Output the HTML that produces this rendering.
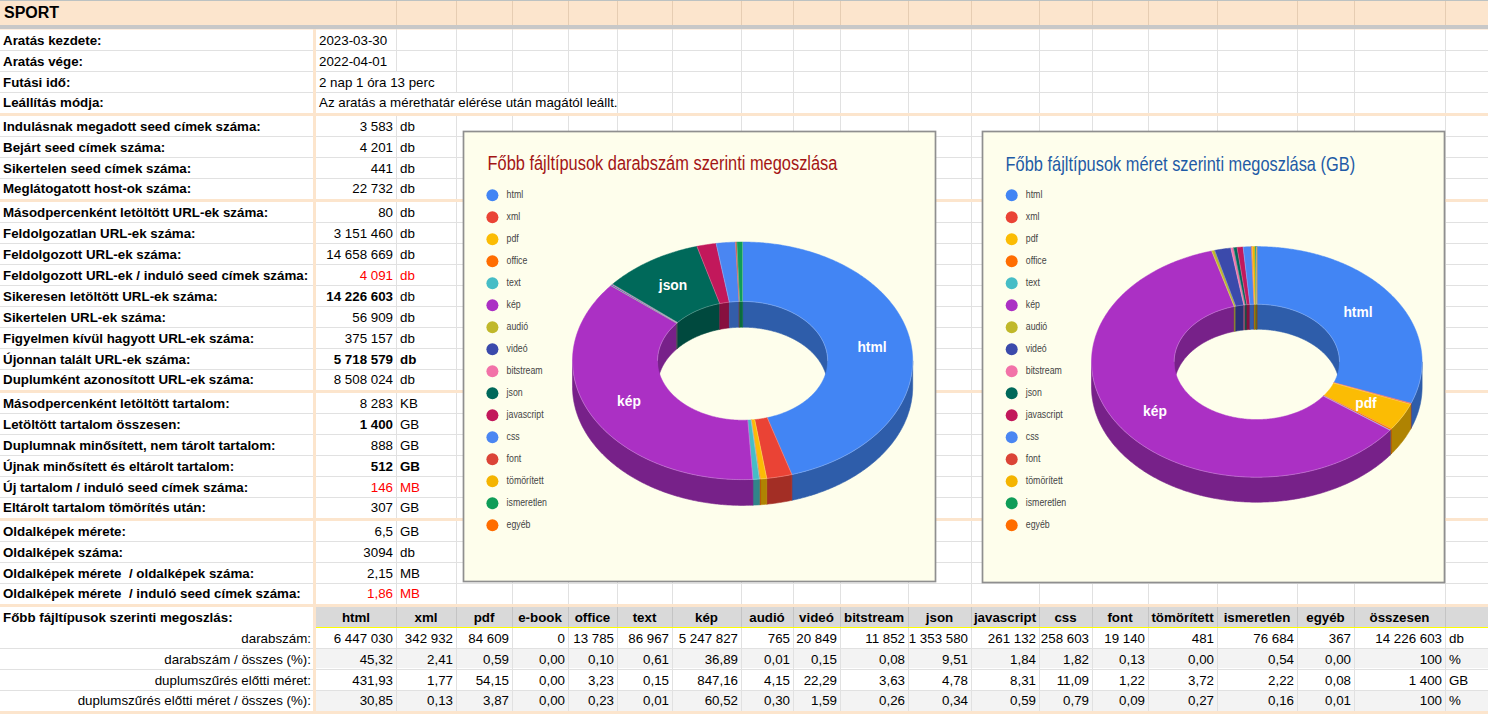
<!DOCTYPE html><html><head><meta charset="utf-8"><style>html,body{margin:0;padding:0;}body{width:1488px;height:714px;overflow:hidden;position:relative;background:#fff;font-family:"Liberation Sans",sans-serif;}</style></head><body>
<div style="position:absolute;left:0px;top:0px;width:1488px;height:1px;background:#bcc2c2;"></div>
<div style="position:absolute;left:0px;top:1px;width:1488px;height:24px;background:#fce5cd;"></div>
<div style="position:absolute;left:396px;top:1px;width:1px;height:24px;background:#e6cdb3;"></div>
<div style="position:absolute;left:456px;top:1px;width:1px;height:24px;background:#e6cdb3;"></div>
<div style="position:absolute;left:512px;top:1px;width:1px;height:24px;background:#e6cdb3;"></div>
<div style="position:absolute;left:568px;top:1px;width:1px;height:24px;background:#e6cdb3;"></div>
<div style="position:absolute;left:617px;top:1px;width:1px;height:24px;background:#e6cdb3;"></div>
<div style="position:absolute;left:672px;top:1px;width:1px;height:24px;background:#e6cdb3;"></div>
<div style="position:absolute;left:741px;top:1px;width:1px;height:24px;background:#e6cdb3;"></div>
<div style="position:absolute;left:793px;top:1px;width:1px;height:24px;background:#e6cdb3;"></div>
<div style="position:absolute;left:840px;top:1px;width:1px;height:24px;background:#e6cdb3;"></div>
<div style="position:absolute;left:908px;top:1px;width:1px;height:24px;background:#e6cdb3;"></div>
<div style="position:absolute;left:971px;top:1px;width:1px;height:24px;background:#e6cdb3;"></div>
<div style="position:absolute;left:1039px;top:1px;width:1px;height:24px;background:#e6cdb3;"></div>
<div style="position:absolute;left:1092px;top:1px;width:1px;height:24px;background:#e6cdb3;"></div>
<div style="position:absolute;left:1148px;top:1px;width:1px;height:24px;background:#e6cdb3;"></div>
<div style="position:absolute;left:1217px;top:1px;width:1px;height:24px;background:#e6cdb3;"></div>
<div style="position:absolute;left:1297px;top:1px;width:1px;height:24px;background:#e6cdb3;"></div>
<div style="position:absolute;left:1354px;top:1px;width:1px;height:24px;background:#e6cdb3;"></div>
<div style="position:absolute;left:1445px;top:1px;width:1px;height:24px;background:#e6cdb3;"></div>
<div style="position:absolute;left:0px;top:25px;width:1488px;height:4px;background:#c8c8c8;"></div>
<div style="position:absolute;left:0px;top:29px;width:1488px;height:1px;background:#fdeee0;"></div>
<div style="position:absolute;top:1.96px;height:21px;line-height:21px;font-size:16px;font-weight:bold;color:#000;white-space:nowrap;left:4px;">SPORT</div>
<div style="position:absolute;left:0px;top:50px;width:1488px;height:1px;background:#e1e1e1;"></div>
<div style="position:absolute;left:0px;top:71px;width:1488px;height:1px;background:#e1e1e1;"></div>
<div style="position:absolute;left:0px;top:92px;width:1488px;height:1px;background:#e1e1e1;"></div>
<div style="position:absolute;left:0px;top:136px;width:1488px;height:1px;background:#e1e1e1;"></div>
<div style="position:absolute;left:0px;top:157px;width:1488px;height:1px;background:#e1e1e1;"></div>
<div style="position:absolute;left:0px;top:178px;width:1488px;height:1px;background:#e1e1e1;"></div>
<div style="position:absolute;left:0px;top:222px;width:1488px;height:1px;background:#e1e1e1;"></div>
<div style="position:absolute;left:0px;top:243px;width:1488px;height:1px;background:#e1e1e1;"></div>
<div style="position:absolute;left:0px;top:264px;width:1488px;height:1px;background:#e1e1e1;"></div>
<div style="position:absolute;left:0px;top:285px;width:1488px;height:1px;background:#e1e1e1;"></div>
<div style="position:absolute;left:0px;top:306px;width:1488px;height:1px;background:#e1e1e1;"></div>
<div style="position:absolute;left:0px;top:327px;width:1488px;height:1px;background:#e1e1e1;"></div>
<div style="position:absolute;left:0px;top:348px;width:1488px;height:1px;background:#e1e1e1;"></div>
<div style="position:absolute;left:0px;top:369px;width:1488px;height:1px;background:#e1e1e1;"></div>
<div style="position:absolute;left:0px;top:413px;width:1488px;height:1px;background:#e1e1e1;"></div>
<div style="position:absolute;left:0px;top:434px;width:1488px;height:1px;background:#e1e1e1;"></div>
<div style="position:absolute;left:0px;top:455px;width:1488px;height:1px;background:#e1e1e1;"></div>
<div style="position:absolute;left:0px;top:476px;width:1488px;height:1px;background:#e1e1e1;"></div>
<div style="position:absolute;left:0px;top:497px;width:1488px;height:1px;background:#e1e1e1;"></div>
<div style="position:absolute;left:0px;top:541px;width:1488px;height:1px;background:#e1e1e1;"></div>
<div style="position:absolute;left:0px;top:562px;width:1488px;height:1px;background:#e1e1e1;"></div>
<div style="position:absolute;left:0px;top:583px;width:1488px;height:1px;background:#e1e1e1;"></div>
<div style="position:absolute;left:0px;top:648px;width:1488px;height:1px;background:#e1e1e1;"></div>
<div style="position:absolute;left:0px;top:669px;width:1488px;height:1px;background:#e1e1e1;"></div>
<div style="position:absolute;left:0px;top:690px;width:1488px;height:1px;background:#e1e1e1;"></div>
<div style="position:absolute;left:396px;top:29px;width:1px;height:575px;background:#e1e1e1;"></div>
<div style="position:absolute;left:456px;top:29px;width:1px;height:575px;background:#e1e1e1;"></div>
<div style="position:absolute;left:512px;top:29px;width:1px;height:575px;background:#e1e1e1;"></div>
<div style="position:absolute;left:568px;top:29px;width:1px;height:575px;background:#e1e1e1;"></div>
<div style="position:absolute;left:617px;top:29px;width:1px;height:575px;background:#e1e1e1;"></div>
<div style="position:absolute;left:672px;top:29px;width:1px;height:575px;background:#e1e1e1;"></div>
<div style="position:absolute;left:741px;top:29px;width:1px;height:575px;background:#e1e1e1;"></div>
<div style="position:absolute;left:793px;top:29px;width:1px;height:575px;background:#e1e1e1;"></div>
<div style="position:absolute;left:840px;top:29px;width:1px;height:575px;background:#e1e1e1;"></div>
<div style="position:absolute;left:908px;top:29px;width:1px;height:575px;background:#e1e1e1;"></div>
<div style="position:absolute;left:971px;top:29px;width:1px;height:575px;background:#e1e1e1;"></div>
<div style="position:absolute;left:1039px;top:29px;width:1px;height:575px;background:#e1e1e1;"></div>
<div style="position:absolute;left:1092px;top:29px;width:1px;height:575px;background:#e1e1e1;"></div>
<div style="position:absolute;left:1148px;top:29px;width:1px;height:575px;background:#e1e1e1;"></div>
<div style="position:absolute;left:1217px;top:29px;width:1px;height:575px;background:#e1e1e1;"></div>
<div style="position:absolute;left:1297px;top:29px;width:1px;height:575px;background:#e1e1e1;"></div>
<div style="position:absolute;left:1354px;top:29px;width:1px;height:575px;background:#e1e1e1;"></div>
<div style="position:absolute;left:1445px;top:29px;width:1px;height:575px;background:#e1e1e1;"></div>
<div style="position:absolute;left:316px;top:607px;width:1172px;height:20px;background:#d9d9d9;"></div>
<div style="position:absolute;left:316px;top:627px;width:1172px;height:1px;background:#ffff00;"></div>
<div style="position:absolute;left:316px;top:649px;width:1172px;height:19px;background:#f3f3f3;"></div>
<div style="position:absolute;left:316px;top:691px;width:1172px;height:20px;background:#f3f3f3;"></div>
<div style="position:absolute;left:396px;top:607px;width:1px;height:20px;background:#c4c4c4;"></div>
<div style="position:absolute;left:396px;top:628px;width:1px;height:83px;background:#e1e1e1;"></div>
<div style="position:absolute;left:456px;top:607px;width:1px;height:20px;background:#c4c4c4;"></div>
<div style="position:absolute;left:456px;top:628px;width:1px;height:83px;background:#e1e1e1;"></div>
<div style="position:absolute;left:512px;top:607px;width:1px;height:20px;background:#c4c4c4;"></div>
<div style="position:absolute;left:512px;top:628px;width:1px;height:83px;background:#e1e1e1;"></div>
<div style="position:absolute;left:568px;top:607px;width:1px;height:20px;background:#c4c4c4;"></div>
<div style="position:absolute;left:568px;top:628px;width:1px;height:83px;background:#e1e1e1;"></div>
<div style="position:absolute;left:617px;top:607px;width:1px;height:20px;background:#c4c4c4;"></div>
<div style="position:absolute;left:617px;top:628px;width:1px;height:83px;background:#e1e1e1;"></div>
<div style="position:absolute;left:672px;top:607px;width:1px;height:20px;background:#c4c4c4;"></div>
<div style="position:absolute;left:672px;top:628px;width:1px;height:83px;background:#e1e1e1;"></div>
<div style="position:absolute;left:741px;top:607px;width:1px;height:20px;background:#c4c4c4;"></div>
<div style="position:absolute;left:741px;top:628px;width:1px;height:83px;background:#e1e1e1;"></div>
<div style="position:absolute;left:793px;top:607px;width:1px;height:20px;background:#c4c4c4;"></div>
<div style="position:absolute;left:793px;top:628px;width:1px;height:83px;background:#e1e1e1;"></div>
<div style="position:absolute;left:840px;top:607px;width:1px;height:20px;background:#c4c4c4;"></div>
<div style="position:absolute;left:840px;top:628px;width:1px;height:83px;background:#e1e1e1;"></div>
<div style="position:absolute;left:908px;top:607px;width:1px;height:20px;background:#c4c4c4;"></div>
<div style="position:absolute;left:908px;top:628px;width:1px;height:83px;background:#e1e1e1;"></div>
<div style="position:absolute;left:971px;top:607px;width:1px;height:20px;background:#c4c4c4;"></div>
<div style="position:absolute;left:971px;top:628px;width:1px;height:83px;background:#e1e1e1;"></div>
<div style="position:absolute;left:1039px;top:607px;width:1px;height:20px;background:#c4c4c4;"></div>
<div style="position:absolute;left:1039px;top:628px;width:1px;height:83px;background:#e1e1e1;"></div>
<div style="position:absolute;left:1092px;top:607px;width:1px;height:20px;background:#c4c4c4;"></div>
<div style="position:absolute;left:1092px;top:628px;width:1px;height:83px;background:#e1e1e1;"></div>
<div style="position:absolute;left:1148px;top:607px;width:1px;height:20px;background:#c4c4c4;"></div>
<div style="position:absolute;left:1148px;top:628px;width:1px;height:83px;background:#e1e1e1;"></div>
<div style="position:absolute;left:1217px;top:607px;width:1px;height:20px;background:#c4c4c4;"></div>
<div style="position:absolute;left:1217px;top:628px;width:1px;height:83px;background:#e1e1e1;"></div>
<div style="position:absolute;left:1297px;top:607px;width:1px;height:20px;background:#c4c4c4;"></div>
<div style="position:absolute;left:1297px;top:628px;width:1px;height:83px;background:#e1e1e1;"></div>
<div style="position:absolute;left:1354px;top:607px;width:1px;height:20px;background:#c4c4c4;"></div>
<div style="position:absolute;left:1354px;top:628px;width:1px;height:83px;background:#e1e1e1;"></div>
<div style="position:absolute;left:1445px;top:607px;width:1px;height:20px;background:#c4c4c4;"></div>
<div style="position:absolute;left:1445px;top:628px;width:1px;height:83px;background:#e1e1e1;"></div>
<div style="position:absolute;left:316px;top:72px;width:140px;height:20px;background:#fff;"></div>
<div style="position:absolute;left:316px;top:93px;width:301px;height:20px;background:#fff;"></div>
<div style="position:absolute;left:0px;top:113px;width:1488px;height:3px;background:#fce5cd;"></div>
<div style="position:absolute;left:0px;top:199px;width:1488px;height:3px;background:#fce5cd;"></div>
<div style="position:absolute;left:0px;top:390px;width:1488px;height:3px;background:#fce5cd;"></div>
<div style="position:absolute;left:0px;top:518px;width:1488px;height:3px;background:#fce5cd;"></div>
<div style="position:absolute;left:0px;top:604px;width:1488px;height:3px;background:#fce5cd;"></div>
<div style="position:absolute;left:0px;top:711px;width:1488px;height:3px;background:#fce5cd;"></div>
<div style="position:absolute;left:313px;top:29px;width:3px;height:685px;background:#fce5cd;"></div>
<div style="position:absolute;top:29.88px;height:21px;line-height:21px;font-size:13.33px;font-weight:bold;color:#000;white-space:nowrap;left:3px;">Aratás kezdete:</div>
<div style="position:absolute;top:29.88px;height:21px;line-height:21px;font-size:13.33px;font-weight:normal;color:#000;white-space:nowrap;left:319px;">2023-03-30</div>
<div style="position:absolute;top:50.88px;height:21px;line-height:21px;font-size:13.33px;font-weight:bold;color:#000;white-space:nowrap;left:3px;">Aratás vége:</div>
<div style="position:absolute;top:50.88px;height:21px;line-height:21px;font-size:13.33px;font-weight:normal;color:#000;white-space:nowrap;left:319px;">2022-04-01</div>
<div style="position:absolute;top:71.88px;height:21px;line-height:21px;font-size:13.33px;font-weight:bold;color:#000;white-space:nowrap;left:3px;">Futási idő:</div>
<div style="position:absolute;top:71.88px;height:21px;line-height:21px;font-size:13.33px;font-weight:normal;color:#000;white-space:nowrap;left:319px;">2 nap 1 óra 13 perc</div>
<div style="position:absolute;top:91.68px;height:21px;line-height:21px;font-size:13.33px;font-weight:bold;color:#000;white-space:nowrap;left:3px;">Leállítás módja:</div>
<div style="position:absolute;top:91.68px;height:21px;line-height:21px;font-size:13.33px;font-weight:normal;color:#000;white-space:nowrap;left:319px;">Az aratás a mérethatár elérése után magától leállt.</div>
<div style="position:absolute;top:115.88px;height:21px;line-height:21px;font-size:13.33px;font-weight:bold;color:#000;white-space:nowrap;left:3px;">Indulásnak megadott seed címek száma:</div>
<div style="position:absolute;top:115.88px;height:21px;line-height:21px;font-size:13.33px;font-weight:normal;color:#000;white-space:nowrap;left:-7px;width:400px;text-align:right;">3 583</div>
<div style="position:absolute;top:115.88px;height:21px;line-height:21px;font-size:13.33px;font-weight:normal;color:#000;white-space:nowrap;left:400px;">db</div>
<div style="position:absolute;top:136.88px;height:21px;line-height:21px;font-size:13.33px;font-weight:bold;color:#000;white-space:nowrap;left:3px;">Bejárt seed címek száma:</div>
<div style="position:absolute;top:136.88px;height:21px;line-height:21px;font-size:13.33px;font-weight:normal;color:#000;white-space:nowrap;left:-7px;width:400px;text-align:right;">4 201</div>
<div style="position:absolute;top:136.88px;height:21px;line-height:21px;font-size:13.33px;font-weight:normal;color:#000;white-space:nowrap;left:400px;">db</div>
<div style="position:absolute;top:157.88px;height:21px;line-height:21px;font-size:13.33px;font-weight:bold;color:#000;white-space:nowrap;left:3px;">Sikertelen seed címek száma:</div>
<div style="position:absolute;top:157.88px;height:21px;line-height:21px;font-size:13.33px;font-weight:normal;color:#000;white-space:nowrap;left:-7px;width:400px;text-align:right;">441</div>
<div style="position:absolute;top:157.88px;height:21px;line-height:21px;font-size:13.33px;font-weight:normal;color:#000;white-space:nowrap;left:400px;">db</div>
<div style="position:absolute;top:177.68px;height:21px;line-height:21px;font-size:13.33px;font-weight:bold;color:#000;white-space:nowrap;left:3px;">Meglátogatott host-ok száma:</div>
<div style="position:absolute;top:177.68px;height:21px;line-height:21px;font-size:13.33px;font-weight:normal;color:#000;white-space:nowrap;left:-7px;width:400px;text-align:right;">22 732</div>
<div style="position:absolute;top:177.68px;height:21px;line-height:21px;font-size:13.33px;font-weight:normal;color:#000;white-space:nowrap;left:400px;">db</div>
<div style="position:absolute;top:201.88px;height:21px;line-height:21px;font-size:13.33px;font-weight:bold;color:#000;white-space:nowrap;left:3px;">Másodpercenként letöltött URL-ek száma:</div>
<div style="position:absolute;top:201.88px;height:21px;line-height:21px;font-size:13.33px;font-weight:normal;color:#000;white-space:nowrap;left:-7px;width:400px;text-align:right;">80</div>
<div style="position:absolute;top:201.88px;height:21px;line-height:21px;font-size:13.33px;font-weight:normal;color:#000;white-space:nowrap;left:400px;">db</div>
<div style="position:absolute;top:222.88px;height:21px;line-height:21px;font-size:13.33px;font-weight:bold;color:#000;white-space:nowrap;left:3px;">Feldolgozatlan URL-ek száma:</div>
<div style="position:absolute;top:222.88px;height:21px;line-height:21px;font-size:13.33px;font-weight:normal;color:#000;white-space:nowrap;left:-7px;width:400px;text-align:right;">3 151 460</div>
<div style="position:absolute;top:222.88px;height:21px;line-height:21px;font-size:13.33px;font-weight:normal;color:#000;white-space:nowrap;left:400px;">db</div>
<div style="position:absolute;top:243.88px;height:21px;line-height:21px;font-size:13.33px;font-weight:bold;color:#000;white-space:nowrap;left:3px;">Feldolgozott URL-ek száma:</div>
<div style="position:absolute;top:243.88px;height:21px;line-height:21px;font-size:13.33px;font-weight:normal;color:#000;white-space:nowrap;left:-7px;width:400px;text-align:right;">14 658 669</div>
<div style="position:absolute;top:243.88px;height:21px;line-height:21px;font-size:13.33px;font-weight:normal;color:#000;white-space:nowrap;left:400px;">db</div>
<div style="position:absolute;top:264.88px;height:21px;line-height:21px;font-size:13.33px;font-weight:bold;color:#000;white-space:nowrap;left:3px;">Feldolgozott URL-ek / induló seed címek száma:</div>
<div style="position:absolute;top:264.88px;height:21px;line-height:21px;font-size:13.33px;font-weight:normal;color:#ff0000;white-space:nowrap;left:-7px;width:400px;text-align:right;">4 091</div>
<div style="position:absolute;top:264.88px;height:21px;line-height:21px;font-size:13.33px;font-weight:normal;color:#ff0000;white-space:nowrap;left:400px;">db</div>
<div style="position:absolute;top:285.88px;height:21px;line-height:21px;font-size:13.33px;font-weight:bold;color:#000;white-space:nowrap;left:3px;">Sikeresen letöltött URL-ek száma:</div>
<div style="position:absolute;top:285.88px;height:21px;line-height:21px;font-size:13.33px;font-weight:bold;color:#000;white-space:nowrap;left:-7px;width:400px;text-align:right;">14 226 603</div>
<div style="position:absolute;top:285.88px;height:21px;line-height:21px;font-size:13.33px;font-weight:normal;color:#000;white-space:nowrap;left:400px;">db</div>
<div style="position:absolute;top:306.88px;height:21px;line-height:21px;font-size:13.33px;font-weight:bold;color:#000;white-space:nowrap;left:3px;">Sikertelen URL-ek száma:</div>
<div style="position:absolute;top:306.88px;height:21px;line-height:21px;font-size:13.33px;font-weight:normal;color:#000;white-space:nowrap;left:-7px;width:400px;text-align:right;">56 909</div>
<div style="position:absolute;top:306.88px;height:21px;line-height:21px;font-size:13.33px;font-weight:normal;color:#000;white-space:nowrap;left:400px;">db</div>
<div style="position:absolute;top:327.88px;height:21px;line-height:21px;font-size:13.33px;font-weight:bold;color:#000;white-space:nowrap;left:3px;">Figyelmen kívül hagyott URL-ek száma:</div>
<div style="position:absolute;top:327.88px;height:21px;line-height:21px;font-size:13.33px;font-weight:normal;color:#000;white-space:nowrap;left:-7px;width:400px;text-align:right;">375 157</div>
<div style="position:absolute;top:327.88px;height:21px;line-height:21px;font-size:13.33px;font-weight:normal;color:#000;white-space:nowrap;left:400px;">db</div>
<div style="position:absolute;top:348.88px;height:21px;line-height:21px;font-size:13.33px;font-weight:bold;color:#000;white-space:nowrap;left:3px;">Újonnan talált URL-ek száma:</div>
<div style="position:absolute;top:348.88px;height:21px;line-height:21px;font-size:13.33px;font-weight:bold;color:#000;white-space:nowrap;left:-7px;width:400px;text-align:right;">5 718 579</div>
<div style="position:absolute;top:348.88px;height:21px;line-height:21px;font-size:13.33px;font-weight:bold;color:#000;white-space:nowrap;left:400px;">db</div>
<div style="position:absolute;top:368.68px;height:21px;line-height:21px;font-size:13.33px;font-weight:bold;color:#000;white-space:nowrap;left:3px;">Duplumként azonosított URL-ek száma:</div>
<div style="position:absolute;top:368.68px;height:21px;line-height:21px;font-size:13.33px;font-weight:normal;color:#000;white-space:nowrap;left:-7px;width:400px;text-align:right;">8 508 024</div>
<div style="position:absolute;top:368.68px;height:21px;line-height:21px;font-size:13.33px;font-weight:normal;color:#000;white-space:nowrap;left:400px;">db</div>
<div style="position:absolute;top:392.88px;height:21px;line-height:21px;font-size:13.33px;font-weight:bold;color:#000;white-space:nowrap;left:3px;">Másodpercenként letöltött tartalom:</div>
<div style="position:absolute;top:392.88px;height:21px;line-height:21px;font-size:13.33px;font-weight:normal;color:#000;white-space:nowrap;left:-7px;width:400px;text-align:right;">8 283</div>
<div style="position:absolute;top:392.88px;height:21px;line-height:21px;font-size:13.33px;font-weight:normal;color:#000;white-space:nowrap;left:400px;">KB</div>
<div style="position:absolute;top:413.88px;height:21px;line-height:21px;font-size:13.33px;font-weight:bold;color:#000;white-space:nowrap;left:3px;">Letöltött tartalom összesen:</div>
<div style="position:absolute;top:413.88px;height:21px;line-height:21px;font-size:13.33px;font-weight:bold;color:#000;white-space:nowrap;left:-7px;width:400px;text-align:right;">1 400</div>
<div style="position:absolute;top:413.88px;height:21px;line-height:21px;font-size:13.33px;font-weight:normal;color:#000;white-space:nowrap;left:400px;">GB</div>
<div style="position:absolute;top:434.88px;height:21px;line-height:21px;font-size:13.33px;font-weight:bold;color:#000;white-space:nowrap;left:3px;">Duplumnak minősített, nem tárolt tartalom:</div>
<div style="position:absolute;top:434.88px;height:21px;line-height:21px;font-size:13.33px;font-weight:normal;color:#000;white-space:nowrap;left:-7px;width:400px;text-align:right;">888</div>
<div style="position:absolute;top:434.88px;height:21px;line-height:21px;font-size:13.33px;font-weight:normal;color:#000;white-space:nowrap;left:400px;">GB</div>
<div style="position:absolute;top:455.88px;height:21px;line-height:21px;font-size:13.33px;font-weight:bold;color:#000;white-space:nowrap;left:3px;">Újnak minősített és eltárolt tartalom:</div>
<div style="position:absolute;top:455.88px;height:21px;line-height:21px;font-size:13.33px;font-weight:bold;color:#000;white-space:nowrap;left:-7px;width:400px;text-align:right;">512</div>
<div style="position:absolute;top:455.88px;height:21px;line-height:21px;font-size:13.33px;font-weight:bold;color:#000;white-space:nowrap;left:400px;">GB</div>
<div style="position:absolute;top:476.88px;height:21px;line-height:21px;font-size:13.33px;font-weight:bold;color:#000;white-space:nowrap;left:3px;">Új tartalom / induló seed címek száma:</div>
<div style="position:absolute;top:476.88px;height:21px;line-height:21px;font-size:13.33px;font-weight:normal;color:#ff0000;white-space:nowrap;left:-7px;width:400px;text-align:right;">146</div>
<div style="position:absolute;top:476.88px;height:21px;line-height:21px;font-size:13.33px;font-weight:normal;color:#ff0000;white-space:nowrap;left:400px;">MB</div>
<div style="position:absolute;top:496.68px;height:21px;line-height:21px;font-size:13.33px;font-weight:bold;color:#000;white-space:nowrap;left:3px;">Eltárolt tartalom tömörítés után:</div>
<div style="position:absolute;top:496.68px;height:21px;line-height:21px;font-size:13.33px;font-weight:normal;color:#000;white-space:nowrap;left:-7px;width:400px;text-align:right;">307</div>
<div style="position:absolute;top:496.68px;height:21px;line-height:21px;font-size:13.33px;font-weight:normal;color:#000;white-space:nowrap;left:400px;">GB</div>
<div style="position:absolute;top:520.88px;height:21px;line-height:21px;font-size:13.33px;font-weight:bold;color:#000;white-space:nowrap;left:3px;">Oldalképek mérete:</div>
<div style="position:absolute;top:520.88px;height:21px;line-height:21px;font-size:13.33px;font-weight:normal;color:#000;white-space:nowrap;left:-7px;width:400px;text-align:right;">6,5</div>
<div style="position:absolute;top:520.88px;height:21px;line-height:21px;font-size:13.33px;font-weight:normal;color:#000;white-space:nowrap;left:400px;">GB</div>
<div style="position:absolute;top:541.88px;height:21px;line-height:21px;font-size:13.33px;font-weight:bold;color:#000;white-space:nowrap;left:3px;">Oldalképek száma:</div>
<div style="position:absolute;top:541.88px;height:21px;line-height:21px;font-size:13.33px;font-weight:normal;color:#000;white-space:nowrap;left:-7px;width:400px;text-align:right;">3094</div>
<div style="position:absolute;top:541.88px;height:21px;line-height:21px;font-size:13.33px;font-weight:normal;color:#000;white-space:nowrap;left:400px;">db</div>
<div style="position:absolute;top:562.88px;height:21px;line-height:21px;font-size:13.33px;font-weight:bold;color:#000;white-space:nowrap;left:3px;">Oldalképek mérete &nbsp;/ oldalképek száma:</div>
<div style="position:absolute;top:562.88px;height:21px;line-height:21px;font-size:13.33px;font-weight:normal;color:#000;white-space:nowrap;left:-7px;width:400px;text-align:right;">2,15</div>
<div style="position:absolute;top:562.88px;height:21px;line-height:21px;font-size:13.33px;font-weight:normal;color:#000;white-space:nowrap;left:400px;">MB</div>
<div style="position:absolute;top:582.68px;height:21px;line-height:21px;font-size:13.33px;font-weight:bold;color:#000;white-space:nowrap;left:3px;">Oldalképek mérete &nbsp;/ induló seed címek száma:</div>
<div style="position:absolute;top:582.68px;height:21px;line-height:21px;font-size:13.33px;font-weight:normal;color:#ff0000;white-space:nowrap;left:-7px;width:400px;text-align:right;">1,86</div>
<div style="position:absolute;top:582.68px;height:21px;line-height:21px;font-size:13.33px;font-weight:normal;color:#ff0000;white-space:nowrap;left:400px;">MB</div>
<div style="position:absolute;top:606.88px;height:21px;line-height:21px;font-size:13.33px;font-weight:bold;color:#000;white-space:nowrap;left:3px;">Főbb fájltípusok szerinti megoszlás:</div>
<div style="position:absolute;top:606.88px;height:21px;line-height:21px;font-size:13.33px;font-weight:bold;color:#000;white-space:nowrap;left:156.0px;width:400px;text-align:center;">html</div>
<div style="position:absolute;top:606.88px;height:21px;line-height:21px;font-size:13.33px;font-weight:bold;color:#000;white-space:nowrap;left:226.0px;width:400px;text-align:center;">xml</div>
<div style="position:absolute;top:606.88px;height:21px;line-height:21px;font-size:13.33px;font-weight:bold;color:#000;white-space:nowrap;left:284.0px;width:400px;text-align:center;">pdf</div>
<div style="position:absolute;top:606.88px;height:21px;line-height:21px;font-size:13.33px;font-weight:bold;color:#000;white-space:nowrap;left:340.0px;width:400px;text-align:center;">e-book</div>
<div style="position:absolute;top:606.88px;height:21px;line-height:21px;font-size:13.33px;font-weight:bold;color:#000;white-space:nowrap;left:392.5px;width:400px;text-align:center;">office</div>
<div style="position:absolute;top:606.88px;height:21px;line-height:21px;font-size:13.33px;font-weight:bold;color:#000;white-space:nowrap;left:444.5px;width:400px;text-align:center;">text</div>
<div style="position:absolute;top:606.88px;height:21px;line-height:21px;font-size:13.33px;font-weight:bold;color:#000;white-space:nowrap;left:506.5px;width:400px;text-align:center;">kép</div>
<div style="position:absolute;top:606.88px;height:21px;line-height:21px;font-size:13.33px;font-weight:bold;color:#000;white-space:nowrap;left:567.0px;width:400px;text-align:center;">audió</div>
<div style="position:absolute;top:606.88px;height:21px;line-height:21px;font-size:13.33px;font-weight:bold;color:#000;white-space:nowrap;left:616.5px;width:400px;text-align:center;">videó</div>
<div style="position:absolute;top:606.88px;height:21px;line-height:21px;font-size:13.33px;font-weight:bold;color:#000;white-space:nowrap;left:674.0px;width:400px;text-align:center;">bitstream</div>
<div style="position:absolute;top:606.88px;height:21px;line-height:21px;font-size:13.33px;font-weight:bold;color:#000;white-space:nowrap;left:739.5px;width:400px;text-align:center;">json</div>
<div style="position:absolute;top:606.88px;height:21px;line-height:21px;font-size:13.33px;font-weight:bold;color:#000;white-space:nowrap;left:805.0px;width:400px;text-align:center;">javascript</div>
<div style="position:absolute;top:606.88px;height:21px;line-height:21px;font-size:13.33px;font-weight:bold;color:#000;white-space:nowrap;left:865.5px;width:400px;text-align:center;">css</div>
<div style="position:absolute;top:606.88px;height:21px;line-height:21px;font-size:13.33px;font-weight:bold;color:#000;white-space:nowrap;left:920.0px;width:400px;text-align:center;">font</div>
<div style="position:absolute;top:606.88px;height:21px;line-height:21px;font-size:13.33px;font-weight:bold;color:#000;white-space:nowrap;left:982.5px;width:400px;text-align:center;">tömörített</div>
<div style="position:absolute;top:606.88px;height:21px;line-height:21px;font-size:13.33px;font-weight:bold;color:#000;white-space:nowrap;left:1057.0px;width:400px;text-align:center;">ismeretlen</div>
<div style="position:absolute;top:606.88px;height:21px;line-height:21px;font-size:13.33px;font-weight:bold;color:#000;white-space:nowrap;left:1125.5px;width:400px;text-align:center;">egyéb</div>
<div style="position:absolute;top:606.88px;height:21px;line-height:21px;font-size:13.33px;font-weight:bold;color:#000;white-space:nowrap;left:1199.5px;width:400px;text-align:center;">összesen</div>
<div style="position:absolute;top:627.88px;height:21px;line-height:21px;font-size:13.33px;font-weight:normal;color:#000;white-space:nowrap;left:-89px;width:400px;text-align:right;">darabszám:</div>
<div style="position:absolute;top:627.88px;height:21px;line-height:21px;font-size:13.33px;font-weight:normal;color:#000;white-space:nowrap;left:-7px;width:400px;text-align:right;">6 447 030</div>
<div style="position:absolute;top:627.88px;height:21px;line-height:21px;font-size:13.33px;font-weight:normal;color:#000;white-space:nowrap;left:53px;width:400px;text-align:right;">342 932</div>
<div style="position:absolute;top:627.88px;height:21px;line-height:21px;font-size:13.33px;font-weight:normal;color:#000;white-space:nowrap;left:109px;width:400px;text-align:right;">84 609</div>
<div style="position:absolute;top:627.88px;height:21px;line-height:21px;font-size:13.33px;font-weight:normal;color:#000;white-space:nowrap;left:165px;width:400px;text-align:right;">0</div>
<div style="position:absolute;top:627.88px;height:21px;line-height:21px;font-size:13.33px;font-weight:normal;color:#000;white-space:nowrap;left:214px;width:400px;text-align:right;">13 785</div>
<div style="position:absolute;top:627.88px;height:21px;line-height:21px;font-size:13.33px;font-weight:normal;color:#000;white-space:nowrap;left:269px;width:400px;text-align:right;">86 967</div>
<div style="position:absolute;top:627.88px;height:21px;line-height:21px;font-size:13.33px;font-weight:normal;color:#000;white-space:nowrap;left:338px;width:400px;text-align:right;">5 247 827</div>
<div style="position:absolute;top:627.88px;height:21px;line-height:21px;font-size:13.33px;font-weight:normal;color:#000;white-space:nowrap;left:390px;width:400px;text-align:right;">765</div>
<div style="position:absolute;top:627.88px;height:21px;line-height:21px;font-size:13.33px;font-weight:normal;color:#000;white-space:nowrap;left:437px;width:400px;text-align:right;">20 849</div>
<div style="position:absolute;top:627.88px;height:21px;line-height:21px;font-size:13.33px;font-weight:normal;color:#000;white-space:nowrap;left:505px;width:400px;text-align:right;">11 852</div>
<div style="position:absolute;top:627.88px;height:21px;line-height:21px;font-size:13.33px;font-weight:normal;color:#000;white-space:nowrap;left:568px;width:400px;text-align:right;">1 353 580</div>
<div style="position:absolute;top:627.88px;height:21px;line-height:21px;font-size:13.33px;font-weight:normal;color:#000;white-space:nowrap;left:636px;width:400px;text-align:right;">261 132</div>
<div style="position:absolute;top:627.88px;height:21px;line-height:21px;font-size:13.33px;font-weight:normal;color:#000;white-space:nowrap;left:689px;width:400px;text-align:right;">258 603</div>
<div style="position:absolute;top:627.88px;height:21px;line-height:21px;font-size:13.33px;font-weight:normal;color:#000;white-space:nowrap;left:745px;width:400px;text-align:right;">19 140</div>
<div style="position:absolute;top:627.88px;height:21px;line-height:21px;font-size:13.33px;font-weight:normal;color:#000;white-space:nowrap;left:814px;width:400px;text-align:right;">481</div>
<div style="position:absolute;top:627.88px;height:21px;line-height:21px;font-size:13.33px;font-weight:normal;color:#000;white-space:nowrap;left:894px;width:400px;text-align:right;">76 684</div>
<div style="position:absolute;top:627.88px;height:21px;line-height:21px;font-size:13.33px;font-weight:normal;color:#000;white-space:nowrap;left:951px;width:400px;text-align:right;">367</div>
<div style="position:absolute;top:627.88px;height:21px;line-height:21px;font-size:13.33px;font-weight:normal;color:#000;white-space:nowrap;left:1042px;width:400px;text-align:right;">14 226 603</div>
<div style="position:absolute;top:627.88px;height:21px;line-height:21px;font-size:13.33px;font-weight:normal;color:#000;white-space:nowrap;left:1449px;">db</div>
<div style="position:absolute;top:648.88px;height:21px;line-height:21px;font-size:13.33px;font-weight:normal;color:#000;white-space:nowrap;left:-89px;width:400px;text-align:right;">darabszám / összes (%):</div>
<div style="position:absolute;top:648.88px;height:21px;line-height:21px;font-size:13.33px;font-weight:normal;color:#000;white-space:nowrap;left:-7px;width:400px;text-align:right;">45,32</div>
<div style="position:absolute;top:648.88px;height:21px;line-height:21px;font-size:13.33px;font-weight:normal;color:#000;white-space:nowrap;left:53px;width:400px;text-align:right;">2,41</div>
<div style="position:absolute;top:648.88px;height:21px;line-height:21px;font-size:13.33px;font-weight:normal;color:#000;white-space:nowrap;left:109px;width:400px;text-align:right;">0,59</div>
<div style="position:absolute;top:648.88px;height:21px;line-height:21px;font-size:13.33px;font-weight:normal;color:#000;white-space:nowrap;left:165px;width:400px;text-align:right;">0,00</div>
<div style="position:absolute;top:648.88px;height:21px;line-height:21px;font-size:13.33px;font-weight:normal;color:#000;white-space:nowrap;left:214px;width:400px;text-align:right;">0,10</div>
<div style="position:absolute;top:648.88px;height:21px;line-height:21px;font-size:13.33px;font-weight:normal;color:#000;white-space:nowrap;left:269px;width:400px;text-align:right;">0,61</div>
<div style="position:absolute;top:648.88px;height:21px;line-height:21px;font-size:13.33px;font-weight:normal;color:#000;white-space:nowrap;left:338px;width:400px;text-align:right;">36,89</div>
<div style="position:absolute;top:648.88px;height:21px;line-height:21px;font-size:13.33px;font-weight:normal;color:#000;white-space:nowrap;left:390px;width:400px;text-align:right;">0,01</div>
<div style="position:absolute;top:648.88px;height:21px;line-height:21px;font-size:13.33px;font-weight:normal;color:#000;white-space:nowrap;left:437px;width:400px;text-align:right;">0,15</div>
<div style="position:absolute;top:648.88px;height:21px;line-height:21px;font-size:13.33px;font-weight:normal;color:#000;white-space:nowrap;left:505px;width:400px;text-align:right;">0,08</div>
<div style="position:absolute;top:648.88px;height:21px;line-height:21px;font-size:13.33px;font-weight:normal;color:#000;white-space:nowrap;left:568px;width:400px;text-align:right;">9,51</div>
<div style="position:absolute;top:648.88px;height:21px;line-height:21px;font-size:13.33px;font-weight:normal;color:#000;white-space:nowrap;left:636px;width:400px;text-align:right;">1,84</div>
<div style="position:absolute;top:648.88px;height:21px;line-height:21px;font-size:13.33px;font-weight:normal;color:#000;white-space:nowrap;left:689px;width:400px;text-align:right;">1,82</div>
<div style="position:absolute;top:648.88px;height:21px;line-height:21px;font-size:13.33px;font-weight:normal;color:#000;white-space:nowrap;left:745px;width:400px;text-align:right;">0,13</div>
<div style="position:absolute;top:648.88px;height:21px;line-height:21px;font-size:13.33px;font-weight:normal;color:#000;white-space:nowrap;left:814px;width:400px;text-align:right;">0,00</div>
<div style="position:absolute;top:648.88px;height:21px;line-height:21px;font-size:13.33px;font-weight:normal;color:#000;white-space:nowrap;left:894px;width:400px;text-align:right;">0,54</div>
<div style="position:absolute;top:648.88px;height:21px;line-height:21px;font-size:13.33px;font-weight:normal;color:#000;white-space:nowrap;left:951px;width:400px;text-align:right;">0,00</div>
<div style="position:absolute;top:648.88px;height:21px;line-height:21px;font-size:13.33px;font-weight:normal;color:#000;white-space:nowrap;left:1042px;width:400px;text-align:right;">100</div>
<div style="position:absolute;top:648.88px;height:21px;line-height:21px;font-size:13.33px;font-weight:normal;color:#000;white-space:nowrap;left:1449px;">%</div>
<div style="position:absolute;top:669.88px;height:21px;line-height:21px;font-size:13.33px;font-weight:normal;color:#000;white-space:nowrap;left:-89px;width:400px;text-align:right;">duplumszűrés előtti méret:</div>
<div style="position:absolute;top:669.88px;height:21px;line-height:21px;font-size:13.33px;font-weight:normal;color:#000;white-space:nowrap;left:-7px;width:400px;text-align:right;">431,93</div>
<div style="position:absolute;top:669.88px;height:21px;line-height:21px;font-size:13.33px;font-weight:normal;color:#000;white-space:nowrap;left:53px;width:400px;text-align:right;">1,77</div>
<div style="position:absolute;top:669.88px;height:21px;line-height:21px;font-size:13.33px;font-weight:normal;color:#000;white-space:nowrap;left:109px;width:400px;text-align:right;">54,15</div>
<div style="position:absolute;top:669.88px;height:21px;line-height:21px;font-size:13.33px;font-weight:normal;color:#000;white-space:nowrap;left:165px;width:400px;text-align:right;">0,00</div>
<div style="position:absolute;top:669.88px;height:21px;line-height:21px;font-size:13.33px;font-weight:normal;color:#000;white-space:nowrap;left:214px;width:400px;text-align:right;">3,23</div>
<div style="position:absolute;top:669.88px;height:21px;line-height:21px;font-size:13.33px;font-weight:normal;color:#000;white-space:nowrap;left:269px;width:400px;text-align:right;">0,15</div>
<div style="position:absolute;top:669.88px;height:21px;line-height:21px;font-size:13.33px;font-weight:normal;color:#000;white-space:nowrap;left:338px;width:400px;text-align:right;">847,16</div>
<div style="position:absolute;top:669.88px;height:21px;line-height:21px;font-size:13.33px;font-weight:normal;color:#000;white-space:nowrap;left:390px;width:400px;text-align:right;">4,15</div>
<div style="position:absolute;top:669.88px;height:21px;line-height:21px;font-size:13.33px;font-weight:normal;color:#000;white-space:nowrap;left:437px;width:400px;text-align:right;">22,29</div>
<div style="position:absolute;top:669.88px;height:21px;line-height:21px;font-size:13.33px;font-weight:normal;color:#000;white-space:nowrap;left:505px;width:400px;text-align:right;">3,63</div>
<div style="position:absolute;top:669.88px;height:21px;line-height:21px;font-size:13.33px;font-weight:normal;color:#000;white-space:nowrap;left:568px;width:400px;text-align:right;">4,78</div>
<div style="position:absolute;top:669.88px;height:21px;line-height:21px;font-size:13.33px;font-weight:normal;color:#000;white-space:nowrap;left:636px;width:400px;text-align:right;">8,31</div>
<div style="position:absolute;top:669.88px;height:21px;line-height:21px;font-size:13.33px;font-weight:normal;color:#000;white-space:nowrap;left:689px;width:400px;text-align:right;">11,09</div>
<div style="position:absolute;top:669.88px;height:21px;line-height:21px;font-size:13.33px;font-weight:normal;color:#000;white-space:nowrap;left:745px;width:400px;text-align:right;">1,22</div>
<div style="position:absolute;top:669.88px;height:21px;line-height:21px;font-size:13.33px;font-weight:normal;color:#000;white-space:nowrap;left:814px;width:400px;text-align:right;">3,72</div>
<div style="position:absolute;top:669.88px;height:21px;line-height:21px;font-size:13.33px;font-weight:normal;color:#000;white-space:nowrap;left:894px;width:400px;text-align:right;">2,22</div>
<div style="position:absolute;top:669.88px;height:21px;line-height:21px;font-size:13.33px;font-weight:normal;color:#000;white-space:nowrap;left:951px;width:400px;text-align:right;">0,08</div>
<div style="position:absolute;top:669.88px;height:21px;line-height:21px;font-size:13.33px;font-weight:normal;color:#000;white-space:nowrap;left:1042px;width:400px;text-align:right;">1 400</div>
<div style="position:absolute;top:669.88px;height:21px;line-height:21px;font-size:13.33px;font-weight:normal;color:#000;white-space:nowrap;left:1449px;">GB</div>
<div style="position:absolute;top:689.68px;height:21px;line-height:21px;font-size:13.33px;font-weight:normal;color:#000;white-space:nowrap;left:-89px;width:400px;text-align:right;">duplumszűrés előtti méret / összes (%):</div>
<div style="position:absolute;top:689.68px;height:21px;line-height:21px;font-size:13.33px;font-weight:normal;color:#000;white-space:nowrap;left:-7px;width:400px;text-align:right;">30,85</div>
<div style="position:absolute;top:689.68px;height:21px;line-height:21px;font-size:13.33px;font-weight:normal;color:#000;white-space:nowrap;left:53px;width:400px;text-align:right;">0,13</div>
<div style="position:absolute;top:689.68px;height:21px;line-height:21px;font-size:13.33px;font-weight:normal;color:#000;white-space:nowrap;left:109px;width:400px;text-align:right;">3,87</div>
<div style="position:absolute;top:689.68px;height:21px;line-height:21px;font-size:13.33px;font-weight:normal;color:#000;white-space:nowrap;left:165px;width:400px;text-align:right;">0,00</div>
<div style="position:absolute;top:689.68px;height:21px;line-height:21px;font-size:13.33px;font-weight:normal;color:#000;white-space:nowrap;left:214px;width:400px;text-align:right;">0,23</div>
<div style="position:absolute;top:689.68px;height:21px;line-height:21px;font-size:13.33px;font-weight:normal;color:#000;white-space:nowrap;left:269px;width:400px;text-align:right;">0,01</div>
<div style="position:absolute;top:689.68px;height:21px;line-height:21px;font-size:13.33px;font-weight:normal;color:#000;white-space:nowrap;left:338px;width:400px;text-align:right;">60,52</div>
<div style="position:absolute;top:689.68px;height:21px;line-height:21px;font-size:13.33px;font-weight:normal;color:#000;white-space:nowrap;left:390px;width:400px;text-align:right;">0,30</div>
<div style="position:absolute;top:689.68px;height:21px;line-height:21px;font-size:13.33px;font-weight:normal;color:#000;white-space:nowrap;left:437px;width:400px;text-align:right;">1,59</div>
<div style="position:absolute;top:689.68px;height:21px;line-height:21px;font-size:13.33px;font-weight:normal;color:#000;white-space:nowrap;left:505px;width:400px;text-align:right;">0,26</div>
<div style="position:absolute;top:689.68px;height:21px;line-height:21px;font-size:13.33px;font-weight:normal;color:#000;white-space:nowrap;left:568px;width:400px;text-align:right;">0,34</div>
<div style="position:absolute;top:689.68px;height:21px;line-height:21px;font-size:13.33px;font-weight:normal;color:#000;white-space:nowrap;left:636px;width:400px;text-align:right;">0,59</div>
<div style="position:absolute;top:689.68px;height:21px;line-height:21px;font-size:13.33px;font-weight:normal;color:#000;white-space:nowrap;left:689px;width:400px;text-align:right;">0,79</div>
<div style="position:absolute;top:689.68px;height:21px;line-height:21px;font-size:13.33px;font-weight:normal;color:#000;white-space:nowrap;left:745px;width:400px;text-align:right;">0,09</div>
<div style="position:absolute;top:689.68px;height:21px;line-height:21px;font-size:13.33px;font-weight:normal;color:#000;white-space:nowrap;left:814px;width:400px;text-align:right;">0,27</div>
<div style="position:absolute;top:689.68px;height:21px;line-height:21px;font-size:13.33px;font-weight:normal;color:#000;white-space:nowrap;left:894px;width:400px;text-align:right;">0,16</div>
<div style="position:absolute;top:689.68px;height:21px;line-height:21px;font-size:13.33px;font-weight:normal;color:#000;white-space:nowrap;left:951px;width:400px;text-align:right;">0,01</div>
<div style="position:absolute;top:689.68px;height:21px;line-height:21px;font-size:13.33px;font-weight:normal;color:#000;white-space:nowrap;left:1042px;width:400px;text-align:right;">100</div>
<div style="position:absolute;top:689.68px;height:21px;line-height:21px;font-size:13.33px;font-weight:normal;color:#000;white-space:nowrap;left:1449px;">%</div>
<svg style="position:absolute;left:0;top:0" width="1488" height="714" font-family="Liberation Sans, sans-serif">
<rect x="463.5" y="131.5" width="472" height="450" fill="#fefeec" stroke="#8f8f8f" stroke-width="1.7"/>
<text transform="translate(487.5,169.9) scale(0.8456,1)" font-size="19.4" fill="#a31515">Főbb fájltípusok darabszám szerinti megoszlása</text>
<circle cx="492.4" cy="195.3" r="6" fill="#4285f4"/>
<text transform="translate(506.6,198.00) scale(0.82,1)" font-size="10.7" fill="#444">html</text>
<circle cx="492.4" cy="217.3" r="6" fill="#ea4335"/>
<text transform="translate(506.6,220.00) scale(0.82,1)" font-size="10.7" fill="#444">xml</text>
<circle cx="492.4" cy="239.3" r="6" fill="#fbbc04"/>
<text transform="translate(506.6,242.00) scale(0.82,1)" font-size="10.7" fill="#444">pdf</text>
<circle cx="492.4" cy="261.3" r="6" fill="#ff6d01"/>
<text transform="translate(506.6,264.00) scale(0.82,1)" font-size="10.7" fill="#444">office</text>
<circle cx="492.4" cy="283.3" r="6" fill="#46bdc6"/>
<text transform="translate(506.6,286.00) scale(0.82,1)" font-size="10.7" fill="#444">text</text>
<circle cx="492.4" cy="305.3" r="6" fill="#ab30c4"/>
<text transform="translate(506.6,308.00) scale(0.82,1)" font-size="10.7" fill="#444">kép</text>
<circle cx="492.4" cy="327.3" r="6" fill="#c0b82a"/>
<text transform="translate(506.6,330.00) scale(0.82,1)" font-size="10.7" fill="#444">audió</text>
<circle cx="492.4" cy="349.3" r="6" fill="#3b4aab"/>
<text transform="translate(506.6,352.00) scale(0.82,1)" font-size="10.7" fill="#444">videó</text>
<circle cx="492.4" cy="371.3" r="6" fill="#f272a8"/>
<text transform="translate(506.6,374.00) scale(0.82,1)" font-size="10.7" fill="#444">bitstream</text>
<circle cx="492.4" cy="393.3" r="6" fill="#00695a"/>
<text transform="translate(506.6,396.00) scale(0.82,1)" font-size="10.7" fill="#444">json</text>
<circle cx="492.4" cy="415.3" r="6" fill="#c2185b"/>
<text transform="translate(506.6,418.00) scale(0.82,1)" font-size="10.7" fill="#444">javascript</text>
<circle cx="492.4" cy="437.3" r="6" fill="#4a86f2"/>
<text transform="translate(506.6,440.00) scale(0.82,1)" font-size="10.7" fill="#444">css</text>
<circle cx="492.4" cy="459.3" r="6" fill="#db4437"/>
<text transform="translate(506.6,462.00) scale(0.82,1)" font-size="10.7" fill="#444">font</text>
<circle cx="492.4" cy="481.3" r="6" fill="#f4b400"/>
<text transform="translate(506.6,484.00) scale(0.82,1)" font-size="10.7" fill="#444">tömörített</text>
<circle cx="492.4" cy="503.3" r="6" fill="#0f9d58"/>
<text transform="translate(506.6,506.00) scale(0.82,1)" font-size="10.7" fill="#444">ismeretlen</text>
<circle cx="492.4" cy="525.3" r="6" fill="#ff6d00"/>
<text transform="translate(506.6,528.00) scale(0.82,1)" font-size="10.7" fill="#444">egyéb</text>
<polygon points="912.70,360.80 912.69,361.98 912.67,363.17 912.62,364.35 912.56,365.54 912.49,366.72 912.40,367.91 912.29,369.09 912.16,370.27 912.02,371.45 911.85,372.63 911.68,373.81 911.48,374.99 911.27,376.16 911.04,377.34 910.80,378.51 910.54,379.68 910.26,380.85 909.97,382.02 909.65,383.18 909.33,384.34 908.98,385.50 908.62,386.66 908.24,387.82 907.85,388.97 907.44,390.12 907.01,391.27 906.57,392.41 906.11,393.55 905.63,394.69 905.14,395.82 904.63,396.95 904.11,398.08 903.57,399.20 903.01,400.32 902.44,401.44 901.85,402.55 901.25,403.66 900.63,404.76 899.99,405.86 899.34,406.95 898.67,408.04 897.99,409.13 897.29,410.21 896.58,411.28 895.85,412.35 895.11,413.42 894.35,414.48 893.57,415.53 892.78,416.58 891.98,417.62 891.16,418.66 890.33,419.69 889.48,420.72 888.62,421.74 887.74,422.75 886.85,423.76 885.94,424.76 885.02,425.76 884.08,426.75 883.14,427.73 882.17,428.71 881.20,429.67 880.21,430.64 879.20,431.59 878.18,432.54 877.15,433.48 876.11,434.41 875.05,435.34 873.98,436.26 872.89,437.17 871.80,438.07 870.69,438.97 869.56,439.86 868.43,440.74 867.28,441.61 866.12,442.48 864.95,443.33 863.76,444.18 862.57,445.02 861.36,445.85 860.14,446.68 858.91,447.49 857.66,448.30 856.41,449.09 855.14,449.88 853.86,450.66 852.57,451.43 851.27,452.19 849.96,452.95 848.64,453.69 847.31,454.42 845.97,455.15 844.61,455.86 843.25,456.57 841.88,457.27 840.50,457.95 839.10,458.63 837.70,459.30 836.29,459.96 834.87,460.60 833.44,461.24 832.00,461.87 830.55,462.49 829.10,463.09 827.63,463.69 826.16,464.28 824.68,464.86 823.18,465.42 821.69,465.98 820.18,466.52 818.67,467.06 817.15,467.58 815.62,468.10 814.08,468.60 812.54,469.09 810.99,469.58 809.43,470.05 807.87,470.51 806.30,470.96 804.72,471.39 803.14,471.82 801.55,472.24 799.96,472.64 798.36,473.04 796.75,473.42 795.14,473.79 793.52,474.15 791.90,474.50 791.90,500.30 793.52,499.95 795.14,499.59 796.75,499.22 798.36,498.84 799.96,498.44 801.55,498.04 803.14,497.62 804.72,497.19 806.30,496.76 807.87,496.31 809.43,495.85 810.99,495.38 812.54,494.89 814.08,494.40 815.62,493.90 817.15,493.38 818.67,492.86 820.18,492.32 821.69,491.78 823.18,491.22 824.68,490.66 826.16,490.08 827.63,489.49 829.10,488.89 830.55,488.29 832.00,487.67 833.44,487.04 834.87,486.40 836.29,485.76 837.70,485.10 839.10,484.43 840.50,483.75 841.88,483.07 843.25,482.37 844.61,481.66 845.97,480.95 847.31,480.22 848.64,479.49 849.96,478.75 851.27,477.99 852.57,477.23 853.86,476.46 855.14,475.68 856.41,474.89 857.66,474.10 858.91,473.29 860.14,472.48 861.36,471.65 862.57,470.82 863.76,469.98 864.95,469.13 866.12,468.28 867.28,467.41 868.43,466.54 869.56,465.66 870.69,464.77 871.80,463.87 872.89,462.97 873.98,462.06 875.05,461.14 876.11,460.21 877.15,459.28 878.18,458.34 879.20,457.39 880.21,456.44 881.20,455.47 882.17,454.51 883.14,453.53 884.08,452.55 885.02,451.56 885.94,450.56 886.85,449.56 887.74,448.55 888.62,447.54 889.48,446.52 890.33,445.49 891.16,444.46 891.98,443.42 892.78,442.38 893.57,441.33 894.35,440.28 895.11,439.22 895.85,438.15 896.58,437.08 897.29,436.01 897.99,434.93 898.67,433.84 899.34,432.75 899.99,431.66 900.63,430.56 901.25,429.46 901.85,428.35 902.44,427.24 903.01,426.12 903.57,425.00 904.11,423.88 904.63,422.75 905.14,421.62 905.63,420.49 906.11,419.35 906.57,418.21 907.01,417.07 907.44,415.92 907.85,414.77 908.24,413.62 908.62,412.46 908.98,411.30 909.33,410.14 909.65,408.98 909.97,407.82 910.26,406.65 910.54,405.48 910.80,404.31 911.04,403.14 911.27,401.96 911.48,400.79 911.68,399.61 911.85,398.43 912.02,397.25 912.16,396.07 912.29,394.89 912.40,393.71 912.49,392.52 912.56,391.34 912.62,390.15 912.67,388.97 912.69,387.78 912.70,386.60" fill="#2e5daa" stroke="#2e5daa" stroke-width="0.6"/>
<polygon points="791.90,474.50 790.36,474.82 788.81,475.13 787.26,475.43 785.70,475.72 784.14,476.00 782.58,476.27 781.02,476.53 779.45,476.78 777.87,477.02 776.30,477.25 774.72,477.46 773.13,477.67 771.55,477.87 769.96,478.05 768.37,478.23 766.78,478.39 766.78,504.19 768.37,504.03 769.96,503.85 771.55,503.67 773.13,503.47 774.72,503.26 776.30,503.05 777.87,502.82 779.45,502.58 781.02,502.33 782.58,502.07 784.14,501.80 785.70,501.52 787.26,501.23 788.81,500.93 790.36,500.62 791.90,500.30" fill="#a32e25" stroke="#a32e25" stroke-width="0.6"/>
<polygon points="766.78,478.39 765.22,478.55 763.65,478.69 762.09,478.82 760.52,478.94 760.52,504.74 762.09,504.62 763.65,504.49 765.22,504.35 766.78,504.19" fill="#af8302" stroke="#af8302" stroke-width="0.6"/>
<polygon points="760.52,478.94 759.46,479.02 759.46,504.82 760.52,504.74" fill="#b24c00" stroke="#b24c00" stroke-width="0.6"/>
<polygon points="759.46,479.02 757.84,479.12 756.21,479.22 754.59,479.30 752.96,479.38 752.96,505.18 754.59,505.10 756.21,505.02 757.84,504.92 759.46,504.82" fill="#31848a" stroke="#31848a" stroke-width="0.6"/>
<polygon points="752.96,479.38 751.27,479.45 749.58,479.50 747.89,479.54 746.20,479.57 744.50,479.59 742.81,479.60 741.12,479.60 739.43,479.58 737.74,479.55 736.04,479.51 734.35,479.46 732.66,479.40 730.97,479.32 729.29,479.24 727.60,479.14 725.91,479.03 724.23,478.91 722.55,478.77 720.87,478.63 719.19,478.47 717.52,478.30 715.85,478.12 714.18,477.93 712.51,477.73 710.84,477.51 709.18,477.28 707.52,477.05 705.87,476.80 704.22,476.54 702.57,476.26 700.93,475.98 699.29,475.68 697.66,475.38 696.03,475.06 694.40,474.73 692.78,474.39 691.16,474.04 689.55,473.68 687.95,473.30 686.35,472.92 684.75,472.52 683.17,472.11 681.58,471.69 680.01,471.26 678.44,470.82 676.87,470.37 675.31,469.91 673.76,469.44 672.22,468.95 670.68,468.46 669.15,467.95 667.63,467.44 666.11,466.91 664.60,466.38 663.10,465.83 661.61,465.27 660.13,464.70 658.65,464.12 657.18,463.54 655.73,462.94 654.27,462.33 652.83,461.71 651.40,461.08 649.98,460.44 648.56,459.79 647.15,459.14 645.76,458.47 644.37,457.79 643.00,457.10 641.63,456.41 640.27,455.70 638.92,454.98 637.59,454.26 636.26,453.52 634.95,452.78 633.64,452.03 632.35,451.27 631.06,450.50 629.79,449.72 628.53,448.93 627.28,448.13 626.04,447.32 624.81,446.51 623.60,445.69 622.40,444.86 621.20,444.02 620.03,443.17 618.86,442.31 617.70,441.45 616.56,440.58 615.43,439.70 614.31,438.81 613.21,437.92 612.11,437.01 611.04,436.10 609.97,435.18 608.92,434.26 607.88,433.33 606.85,432.39 605.84,431.44 604.84,430.49 603.85,429.52 602.88,428.56 601.92,427.58 600.98,426.60 600.05,425.61 599.13,424.62 598.23,423.62 597.34,422.61 596.47,421.60 595.61,420.58 594.76,419.56 593.93,418.53 593.12,417.49 592.32,416.45 591.53,415.40 590.76,414.35 590.01,413.29 589.27,412.23 588.54,411.16 587.83,410.09 587.14,409.01 586.46,407.93 585.79,406.84 585.15,405.75 584.51,404.65 583.90,403.55 583.30,402.45 582.71,401.34 582.14,400.23 581.59,399.11 581.05,397.99 580.53,396.86 580.02,395.74 579.53,394.60 579.06,393.47 578.60,392.33 578.16,391.19 577.74,390.05 577.33,388.90 576.93,387.75 576.56,386.60 576.20,385.44 575.86,384.28 575.53,383.12 575.22,381.96 574.93,380.80 574.65,379.63 574.39,378.46 574.15,377.29 573.92,376.12 573.71,374.95 573.52,373.78 573.34,372.60 573.18,371.42 573.04,370.25 572.91,369.07 572.80,367.89 572.71,366.71 572.63,365.53 572.58,364.35 572.53,363.16 572.51,361.98 572.50,360.80 572.50,386.60 572.51,387.78 572.53,388.96 572.58,390.15 572.63,391.33 572.71,392.51 572.80,393.69 572.91,394.87 573.04,396.05 573.18,397.22 573.34,398.40 573.52,399.58 573.71,400.75 573.92,401.92 574.15,403.09 574.39,404.26 574.65,405.43 574.93,406.60 575.22,407.76 575.53,408.92 575.86,410.08 576.20,411.24 576.56,412.40 576.93,413.55 577.33,414.70 577.74,415.85 578.16,416.99 578.60,418.13 579.06,419.27 579.53,420.40 580.02,421.54 580.53,422.66 581.05,423.79 581.59,424.91 582.14,426.03 582.71,427.14 583.30,428.25 583.90,429.35 584.51,430.45 585.15,431.55 585.79,432.64 586.46,433.73 587.14,434.81 587.83,435.89 588.54,436.96 589.27,438.03 590.01,439.09 590.76,440.15 591.53,441.20 592.32,442.25 593.12,443.29 593.93,444.33 594.76,445.36 595.61,446.38 596.47,447.40 597.34,448.41 598.23,449.42 599.13,450.42 600.05,451.41 600.98,452.40 601.92,453.38 602.88,454.36 603.85,455.32 604.84,456.29 605.84,457.24 606.85,458.19 607.88,459.13 608.92,460.06 609.97,460.98 611.04,461.90 612.11,462.81 613.21,463.72 614.31,464.61 615.43,465.50 616.56,466.38 617.70,467.25 618.86,468.11 620.03,468.97 621.20,469.82 622.40,470.66 623.60,471.49 624.81,472.31 626.04,473.12 627.28,473.93 628.53,474.73 629.79,475.52 631.06,476.30 632.35,477.07 633.64,477.83 634.95,478.58 636.26,479.32 637.59,480.06 638.92,480.78 640.27,481.50 641.63,482.21 643.00,482.90 644.37,483.59 645.76,484.27 647.15,484.94 648.56,485.59 649.98,486.24 651.40,486.88 652.83,487.51 654.27,488.13 655.73,488.74 657.18,489.34 658.65,489.92 660.13,490.50 661.61,491.07 663.10,491.63 664.60,492.18 666.11,492.71 667.63,493.24 669.15,493.75 670.68,494.26 672.22,494.75 673.76,495.24 675.31,495.71 676.87,496.17 678.44,496.62 680.01,497.06 681.58,497.49 683.17,497.91 684.75,498.32 686.35,498.72 687.95,499.10 689.55,499.48 691.16,499.84 692.78,500.19 694.40,500.53 696.03,500.86 697.66,501.18 699.29,501.48 700.93,501.78 702.57,502.06 704.22,502.34 705.87,502.60 707.52,502.85 709.18,503.08 710.84,503.31 712.51,503.53 714.18,503.73 715.85,503.92 717.52,504.10 719.19,504.27 720.87,504.43 722.55,504.57 724.23,504.71 725.91,504.83 727.60,504.94 729.29,505.04 730.97,505.12 732.66,505.20 734.35,505.26 736.04,505.31 737.74,505.35 739.43,505.38 741.12,505.40 742.81,505.40 744.50,505.39 746.20,505.37 747.89,505.34 749.58,505.30 751.27,505.25 752.96,505.18" fill="#772189" stroke="#772189" stroke-width="0.6"/>
<polygon points="742.60,301.40 743.45,301.40 744.29,301.41 745.14,301.43 745.98,301.45 746.83,301.47 747.67,301.51 748.51,301.54 749.36,301.59 750.20,301.64 751.04,301.69 751.88,301.75 752.72,301.82 753.56,301.90 754.40,301.97 755.24,302.06 756.07,302.15 756.91,302.25 757.74,302.35 758.57,302.46 759.40,302.57 760.23,302.69 761.05,302.82 761.88,302.95 762.70,303.08 763.52,303.23 764.34,303.37 765.16,303.53 765.97,303.69 766.78,303.85 767.59,304.02 768.40,304.20 769.20,304.38 770.01,304.57 770.80,304.76 771.60,304.96 772.39,305.16 773.18,305.37 773.97,305.59 774.76,305.81 775.54,306.04 776.32,306.27 777.09,306.50 777.86,306.75 778.63,306.99 779.39,307.25 780.15,307.50 780.91,307.77 781.66,308.04 782.41,308.31 783.16,308.59 783.90,308.87 784.64,309.16 785.37,309.46 786.10,309.76 786.82,310.06 787.54,310.37 788.26,310.68 788.97,311.00 789.68,311.33 790.38,311.66 791.07,311.99 791.77,312.33 792.45,312.68 793.14,313.02 793.81,313.38 794.49,313.73 795.15,314.10 795.82,314.46 796.47,314.84 797.13,315.21 797.77,315.59 798.41,315.98 799.05,316.37 799.68,316.76 800.30,317.16 800.92,317.56 801.53,317.97 802.14,318.38 802.74,318.80 803.33,319.22 803.92,319.64 804.51,320.07 805.08,320.50 805.65,320.94 806.22,321.38 806.78,321.82 807.33,322.27 807.87,322.72 808.41,323.17 808.94,323.63 809.47,324.10 809.99,324.56 810.50,325.03 811.01,325.50 811.51,325.98 812.00,326.46 812.48,326.94 812.96,327.43 813.43,327.92 813.90,328.42 814.36,328.91 814.81,329.41 815.25,329.91 815.69,330.42 816.11,330.93 816.54,331.44 816.95,331.96 817.36,332.47 817.76,332.99 818.15,333.52 818.53,334.04 818.91,334.57 819.28,335.10 819.64,335.64 820.00,336.17 820.34,336.71 820.68,337.25 821.01,337.80 821.34,338.34 821.65,338.89 821.96,339.44 822.26,339.99 822.55,340.55 822.84,341.10 823.11,341.66 823.38,342.22 823.64,342.78 823.90,343.35 824.14,343.91 824.38,344.48 824.60,345.05 824.82,345.62 825.04,346.19 825.24,346.76 825.44,347.34 825.62,347.91 825.80,348.49 825.97,349.07 826.14,349.65 826.29,350.23 826.44,350.81 826.58,351.39 826.71,351.97 826.83,352.56 826.94,353.14 827.05,353.73 827.14,354.32 827.23,354.90 827.31,355.49 827.38,356.08 827.44,356.67 827.50,357.26 827.54,357.85 827.58,358.44 827.61,359.03 827.63,359.62 827.65,360.21 827.65,360.80 827.65,386.60 827.65,386.01 827.63,385.42 827.61,384.83 827.58,384.24 827.54,383.65 827.50,383.06 827.44,382.47 827.38,381.88 827.31,381.29 827.23,380.70 827.14,380.12 827.05,379.53 826.94,378.94 826.83,378.36 826.71,377.77 826.58,377.19 826.44,376.61 826.29,376.03 826.14,375.45 825.97,374.87 825.80,374.29 825.62,373.71 825.44,373.14 825.24,372.56 825.04,371.99 824.82,371.42 824.60,370.85 824.38,370.28 824.14,369.71 823.90,369.15 823.64,368.58 823.38,368.02 823.11,367.46 822.84,366.90 822.55,366.35 822.26,365.79 821.96,365.24 821.65,364.69 821.34,364.14 821.01,363.60 820.68,363.05 820.34,362.51 820.00,361.97 819.64,361.44 819.28,360.90 818.91,360.37 818.53,359.84 818.15,359.32 817.76,358.79 817.36,358.27 816.95,357.76 816.54,357.24 816.11,356.73 815.69,356.22 815.25,355.71 814.81,355.21 814.36,354.71 813.90,354.22 813.43,353.72 812.96,353.23 812.48,352.74 812.00,352.26 811.51,351.78 811.01,351.30 810.50,350.83 809.99,350.36 809.47,349.90 808.94,349.43 808.41,348.97 807.87,348.52 807.33,348.07 806.78,347.62 806.22,347.18 805.65,346.74 805.08,346.30 804.51,345.87 803.92,345.44 803.33,345.02 802.74,344.60 802.14,344.18 801.53,343.77 800.92,343.36 800.30,342.96 799.68,342.56 799.05,342.17 798.41,341.78 797.77,341.39 797.13,341.01 796.47,340.64 795.82,340.26 795.15,339.90 794.49,339.53 793.81,339.18 793.14,338.82 792.45,338.48 791.77,338.13 791.07,337.79 790.38,337.46 789.68,337.13 788.97,336.80 788.26,336.48 787.54,336.17 786.82,335.86 786.10,335.56 785.37,335.26 784.64,334.96 783.90,334.67 783.16,334.39 782.41,334.11 781.66,333.84 780.91,333.57 780.15,333.30 779.39,333.05 778.63,332.79 777.86,332.55 777.09,332.30 776.32,332.07 775.54,331.84 774.76,331.61 773.97,331.39 773.18,331.17 772.39,330.96 771.60,330.76 770.80,330.56 770.01,330.37 769.20,330.18 768.40,330.00 767.59,329.82 766.78,329.65 765.97,329.49 765.16,329.33 764.34,329.17 763.52,329.03 762.70,328.88 761.88,328.75 761.05,328.62 760.23,328.49 759.40,328.37 758.57,328.26 757.74,328.15 756.91,328.05 756.07,327.95 755.24,327.86 754.40,327.77 753.56,327.70 752.72,327.62 751.88,327.55 751.04,327.49 750.20,327.44 749.36,327.39 748.51,327.34 747.67,327.31 746.83,327.27 745.98,327.25 745.14,327.23 744.29,327.21 743.45,327.20 742.60,327.20" fill="#2e5daa" stroke="#2e5daa" stroke-width="0.6"/>
<polygon points="657.55,360.80 657.55,360.21 657.57,359.62 657.59,359.03 657.62,358.44 657.66,357.85 657.70,357.26 657.76,356.67 657.82,356.08 657.89,355.49 657.97,354.90 658.06,354.32 658.15,353.73 658.26,353.14 658.37,352.56 658.49,351.97 658.62,351.39 658.76,350.81 658.91,350.22 659.06,349.64 659.23,349.06 659.40,348.49 659.58,347.91 659.76,347.33 659.96,346.76 660.16,346.19 660.38,345.61 660.60,345.04 660.83,344.47 661.06,343.91 661.31,343.34 661.56,342.78 661.82,342.22 662.09,341.66 662.36,341.10 662.65,340.54 662.94,339.99 663.24,339.44 663.55,338.89 663.87,338.34 664.19,337.79 664.52,337.25 664.86,336.71 665.21,336.17 665.56,335.63 665.92,335.10 666.29,334.57 666.67,334.04 667.06,333.51 667.45,332.99 667.85,332.47 668.25,331.95 668.67,331.44 669.09,330.92 669.52,330.42 669.96,329.91 670.40,329.41 670.85,328.91 671.31,328.41 671.77,327.92 672.24,327.43 672.72,326.94 673.21,326.46 673.70,325.97 674.20,325.50 674.71,325.02 675.22,324.56 675.74,324.09 676.26,323.63 676.80,323.17 676.80,348.97 676.26,349.43 675.74,349.89 675.22,350.36 674.71,350.82 674.20,351.30 673.70,351.77 673.21,352.26 672.72,352.74 672.24,353.23 671.77,353.72 671.31,354.21 670.85,354.71 670.40,355.21 669.96,355.71 669.52,356.22 669.09,356.72 668.67,357.24 668.25,357.75 667.85,358.27 667.45,358.79 667.06,359.31 666.67,359.84 666.29,360.37 665.92,360.90 665.56,361.43 665.21,361.97 664.86,362.51 664.52,363.05 664.19,363.59 663.87,364.14 663.55,364.69 663.24,365.24 662.94,365.79 662.65,366.34 662.36,366.90 662.09,367.46 661.82,368.02 661.56,368.58 661.31,369.14 661.06,369.71 660.83,370.27 660.60,370.84 660.38,371.41 660.16,371.99 659.96,372.56 659.76,373.13 659.58,373.71 659.40,374.29 659.23,374.86 659.06,375.44 658.91,376.02 658.76,376.61 658.62,377.19 658.49,377.77 658.37,378.36 658.26,378.94 658.15,379.53 658.06,380.12 657.97,380.70 657.89,381.29 657.82,381.88 657.76,382.47 657.70,383.06 657.66,383.65 657.62,384.24 657.59,384.83 657.57,385.42 657.55,386.01 657.55,386.60" fill="#772189" stroke="#772189" stroke-width="0.6"/>
<polygon points="676.80,323.17 676.83,323.14 676.83,348.94 676.80,348.97" fill="#86801d" stroke="#86801d" stroke-width="0.6"/>
<polygon points="676.83,323.14 677.34,322.71 677.34,348.51 676.83,348.94" fill="#293377" stroke="#293377" stroke-width="0.6"/>
<polygon points="677.34,322.71 677.62,322.48 677.62,348.28 677.34,348.51" fill="#a94f75" stroke="#a94f75" stroke-width="0.6"/>
<polygon points="677.62,322.48 678.17,322.03 678.72,321.58 679.28,321.14 679.85,320.70 680.43,320.27 681.01,319.84 681.60,319.41 682.19,318.99 682.79,318.57 683.39,318.16 684.00,317.75 684.62,317.34 685.24,316.94 685.87,316.54 686.51,316.15 687.15,315.76 687.79,315.38 688.44,315.00 689.10,314.63 689.76,314.26 690.42,313.89 691.10,313.53 691.77,313.17 692.45,312.82 693.14,312.48 693.83,312.14 694.53,311.80 695.23,311.47 695.93,311.14 696.65,310.82 697.36,310.50 698.08,310.19 698.80,309.88 699.53,309.58 700.26,309.28 701.00,308.99 701.74,308.70 702.49,308.42 703.24,308.15 703.99,307.87 704.74,307.61 705.51,307.35 706.27,307.09 707.04,306.84 707.81,306.60 708.58,306.36 709.36,306.12 710.14,305.90 710.93,305.67 711.71,305.46 712.50,305.24 713.30,305.04 714.09,304.84 714.89,304.64 715.70,304.45 716.50,304.27 717.31,304.09 718.12,303.91 718.93,303.75 719.75,303.58 719.75,329.38 718.93,329.55 718.12,329.71 717.31,329.89 716.50,330.07 715.70,330.25 714.89,330.44 714.09,330.64 713.30,330.84 712.50,331.04 711.71,331.26 710.93,331.47 710.14,331.70 709.36,331.92 708.58,332.16 707.81,332.40 707.04,332.64 706.27,332.89 705.51,333.15 704.74,333.41 703.99,333.67 703.24,333.95 702.49,334.22 701.74,334.50 701.00,334.79 700.26,335.08 699.53,335.38 698.80,335.68 698.08,335.99 697.36,336.30 696.65,336.62 695.93,336.94 695.23,337.27 694.53,337.60 693.83,337.94 693.14,338.28 692.45,338.62 691.77,338.97 691.10,339.33 690.42,339.69 689.76,340.06 689.10,340.43 688.44,340.80 687.79,341.18 687.15,341.56 686.51,341.95 685.87,342.34 685.24,342.74 684.62,343.14 684.00,343.55 683.39,343.96 682.79,344.37 682.19,344.79 681.60,345.21 681.01,345.64 680.43,346.07 679.85,346.50 679.28,346.94 678.72,347.38 678.17,347.83 677.62,348.28" fill="#00493e" stroke="#00493e" stroke-width="0.6"/>
<polygon points="719.75,303.58 720.54,303.43 721.33,303.29 722.12,303.15 722.92,303.01 723.72,302.88 724.52,302.76 725.32,302.64 726.12,302.53 726.93,302.42 727.73,302.31 728.54,302.22 729.35,302.13 729.35,327.93 728.54,328.02 727.73,328.11 726.93,328.22 726.12,328.33 725.32,328.44 724.52,328.56 723.72,328.68 722.92,328.81 722.12,328.95 721.33,329.09 720.54,329.23 719.75,329.38" fill="#87103f" stroke="#87103f" stroke-width="0.6"/>
<polygon points="729.35,302.13 730.15,302.04 730.95,301.96 731.75,301.88 732.56,301.82 733.36,301.75 734.17,301.69 734.98,301.64 735.78,301.59 736.59,301.55 737.40,301.51 738.21,301.48 739.02,301.45 739.02,327.25 738.21,327.28 737.40,327.31 736.59,327.35 735.78,327.39 734.98,327.44 734.17,327.49 733.36,327.55 732.56,327.62 731.75,327.68 730.95,327.76 730.15,327.84 729.35,327.93" fill="#335da9" stroke="#335da9" stroke-width="0.6"/>
<polygon points="739.02,301.45 739.71,301.43 739.71,327.23 739.02,327.25" fill="#992f26" stroke="#992f26" stroke-width="0.6"/>
<polygon points="739.71,301.43 740.44,301.42 741.16,301.41 741.88,301.40 742.60,301.40 742.60,327.20 741.88,327.20 741.16,327.21 740.44,327.22 739.71,327.23" fill="#0a6d3d" stroke="#0a6d3d" stroke-width="0.6"/>
<polygon points="742.60,242.00 744.30,242.01 746.00,242.02 747.70,242.05 749.40,242.09 751.09,242.15 752.79,242.21 754.49,242.29 756.18,242.38 757.88,242.48 759.57,242.59 761.26,242.72 762.95,242.85 764.63,243.00 766.32,243.16 768.00,243.33 769.68,243.51 771.35,243.71 773.03,243.92 774.70,244.13 776.36,244.36 778.03,244.61 779.69,244.86 781.35,245.12 783.00,245.40 784.65,245.69 786.29,245.99 787.93,246.30 789.57,246.62 791.20,246.95 792.83,247.30 794.45,247.65 796.06,248.02 797.67,248.40 799.28,248.79 800.88,249.19 802.47,249.60 804.06,250.03 805.64,250.46 807.22,250.91 808.79,251.36 810.35,251.83 811.90,252.31 813.45,252.80 814.99,253.30 816.53,253.81 818.06,254.33 819.57,254.86 821.09,255.40 822.59,255.96 824.09,256.52 825.57,257.09 827.05,257.68 828.52,258.27 829.99,258.88 831.44,259.49 832.89,260.12 834.32,260.75 835.75,261.40 837.17,262.05 838.57,262.72 839.97,263.39 841.36,264.07 842.74,264.77 844.11,265.47 845.47,266.18 846.81,266.91 848.15,267.64 849.48,268.38 850.80,269.13 852.10,269.89 853.40,270.66 854.68,271.44 855.95,272.22 857.22,273.02 858.47,273.82 859.70,274.64 860.93,275.46 862.15,276.29 863.35,277.13 864.54,277.97 865.72,278.83 866.89,279.69 868.04,280.56 869.18,281.44 870.31,282.33 871.43,283.22 872.53,284.13 873.62,285.04 874.70,285.95 875.76,286.88 876.81,287.81 877.85,288.75 878.87,289.70 879.88,290.66 880.88,291.62 881.86,292.59 882.83,293.56 883.79,294.54 884.73,295.53 885.65,296.53 886.57,297.53 887.47,298.54 888.35,299.55 889.22,300.57 890.07,301.60 890.91,302.63 891.74,303.67 892.55,304.71 893.34,305.76 894.12,306.81 894.89,307.87 895.64,308.94 896.37,310.01 897.09,311.08 897.79,312.16 898.48,313.25 899.15,314.34 899.81,315.43 900.45,316.53 901.08,317.64 901.69,318.75 902.28,319.86 902.86,320.97 903.42,322.09 903.96,323.22 904.49,324.35 905.01,325.48 905.50,326.61 905.99,327.75 906.45,328.89 906.90,330.04 907.33,331.19 907.75,332.34 908.14,333.49 908.53,334.65 908.89,335.81 909.24,336.97 909.57,338.13 909.89,339.30 910.19,340.47 910.47,341.64 910.74,342.81 910.99,343.98 911.22,345.16 911.43,346.34 911.63,347.52 911.81,348.70 911.98,349.88 912.13,351.06 912.26,352.24 912.37,353.43 912.47,354.61 912.55,355.80 912.61,356.98 912.66,358.17 912.69,359.36 912.70,360.54 912.69,361.73 912.67,362.92 912.63,364.10 912.58,365.29 912.51,366.48 912.42,367.66 912.31,368.85 912.19,370.03 912.05,371.21 911.89,372.40 911.71,373.58 911.52,374.76 911.31,375.93 911.09,377.11 910.85,378.29 910.59,379.46 910.31,380.63 910.02,381.80 909.71,382.97 909.39,384.13 909.05,385.29 908.69,386.45 908.31,387.61 907.92,388.77 907.51,389.92 907.09,391.07 906.65,392.21 906.19,393.36 905.71,394.50 905.22,395.63 904.72,396.77 904.19,397.90 903.66,399.02 903.10,400.14 902.53,401.26 901.94,402.38 901.34,403.49 900.72,404.59 900.09,405.69 899.44,406.79 898.77,407.88 898.09,408.97 897.39,410.05 896.68,411.13 895.95,412.20 895.21,413.27 894.45,414.33 893.68,415.39 892.89,416.44 892.09,417.49 891.27,418.53 890.44,419.56 889.59,420.59 888.72,421.61 887.85,422.63 886.96,423.64 886.05,424.64 885.13,425.64 884.19,426.63 883.25,427.62 882.28,428.60 881.31,429.57 880.32,430.53 879.31,431.49 878.29,432.44 877.26,433.38 876.22,434.32 875.16,435.25 874.09,436.17 873.00,437.08 871.90,437.99 870.79,438.89 869.67,439.78 868.53,440.66 867.38,441.54 866.22,442.40 865.05,443.26 863.86,444.11 862.67,444.95 861.46,445.79 860.23,446.61 859.00,447.43 857.76,448.24 856.50,449.04 855.23,449.83 853.95,450.61 852.66,451.38 851.36,452.14 850.05,452.90 848.73,453.64 847.39,454.38 846.05,455.11 844.69,455.82 843.33,456.53 841.96,457.23 840.57,457.92 839.18,458.60 837.77,459.26 836.36,459.92 834.94,460.57 833.50,461.21 832.06,461.84 830.61,462.46 829.16,463.07 827.69,463.67 826.21,464.26 824.73,464.84 823.24,465.40 821.73,465.96 820.23,466.51 818.71,467.04 817.19,467.57 815.66,468.09 814.12,468.59 812.57,469.08 811.02,469.57 809.46,470.04 807.89,470.50 806.32,470.95 804.74,471.39 803.16,471.82 801.57,472.23 799.97,472.64 798.37,473.03 796.76,473.42 795.14,473.79 793.52,474.15 791.90,474.50 767.25,417.65 768.06,417.48 768.87,417.30 769.68,417.11 770.48,416.92 771.28,416.72 772.08,416.52 772.88,416.31 773.67,416.09 774.46,415.87 775.25,415.65 776.03,415.42 776.81,415.18 777.59,414.94 778.36,414.69 779.13,414.44 779.89,414.18 780.66,413.92 781.41,413.65 782.17,413.38 782.92,413.10 783.66,412.82 784.41,412.53 785.14,412.23 785.88,411.93 786.61,411.63 787.33,411.32 788.05,411.01 788.77,410.69 789.48,410.36 790.19,410.03 790.89,409.70 791.59,409.36 792.28,409.01 792.96,408.66 793.65,408.31 794.32,407.95 795.00,407.59 795.66,407.22 796.32,406.85 796.98,406.47 797.63,406.09 798.28,405.70 798.92,405.31 799.55,404.92 800.18,404.52 800.80,404.11 801.42,403.71 802.03,403.29 802.63,402.88 803.23,402.46 803.82,402.03 804.41,401.60 804.99,401.17 805.57,400.73 806.13,400.29 806.70,399.84 807.25,399.39 807.80,398.94 808.34,398.48 808.88,398.02 809.41,397.56 809.93,397.09 810.45,396.62 810.96,396.14 811.46,395.67 811.95,395.18 812.44,394.70 812.92,394.21 813.40,393.72 813.86,393.22 814.32,392.72 814.78,392.22 815.22,391.71 815.66,391.21 816.09,390.69 816.52,390.18 816.93,389.66 817.34,389.14 817.75,388.62 818.14,388.09 818.53,387.57 818.91,387.03 819.28,386.50 819.64,385.96 820.00,385.43 820.35,384.88 820.69,384.34 821.02,383.79 821.34,383.25 821.66,382.70 821.97,382.14 822.27,381.59 822.56,381.03 822.85,380.47 823.13,379.91 823.40,379.35 823.66,378.78 823.91,378.22 824.16,377.65 824.39,377.08 824.62,376.51 824.84,375.93 825.06,375.36 825.26,374.78 825.46,374.21 825.64,373.63 825.82,373.05 825.99,372.47 826.16,371.88 826.31,371.30 826.46,370.71 826.59,370.13 826.72,369.54 826.84,368.96 826.96,368.37 827.06,367.78 827.16,367.19 827.24,366.60 827.32,366.01 827.39,365.42 827.45,364.82 827.51,364.23 827.55,363.64 827.59,363.05 827.62,362.45 827.64,361.86 827.65,361.27 827.65,360.67 827.64,360.08 827.63,359.49 827.61,358.89 827.57,358.30 827.53,357.71 827.49,357.11 827.43,356.52 827.36,355.93 827.29,355.34 827.21,354.75 827.12,354.16 827.02,353.57 826.91,352.98 826.79,352.39 826.67,351.80 826.54,351.22 826.39,350.63 826.25,350.05 826.09,349.47 825.92,348.88 825.75,348.30 825.56,347.72 825.37,347.15 825.17,346.57 824.97,345.99 824.75,345.42 824.53,344.85 824.29,344.28 824.05,343.71 823.80,343.14 823.55,342.57 823.28,342.01 823.01,341.45 822.73,340.89 822.44,340.33 822.14,339.77 821.84,339.22 821.53,338.67 821.20,338.12 820.88,337.57 820.54,337.02 820.20,336.48 819.84,335.94 819.48,335.40 819.12,334.87 818.74,334.34 818.36,333.81 817.97,333.28 817.57,332.75 817.17,332.23 816.76,331.71 816.34,331.20 815.91,330.68 815.47,330.17 815.03,329.67 814.58,329.16 814.13,328.66 813.66,328.17 813.19,327.67 812.72,327.18 812.23,326.69 811.74,326.21 811.24,325.73 810.74,325.25 810.22,324.78 809.71,324.31 809.18,323.84 808.65,323.38 808.11,322.92 807.56,322.46 807.01,322.01 806.46,321.56 805.89,321.12 805.32,320.68 804.74,320.25 804.16,319.81 803.57,319.39 802.97,318.96 802.37,318.54 801.77,318.13 801.15,317.72 800.53,317.31 799.91,316.91 799.28,316.51 798.64,316.12 798.00,315.73 797.35,315.35 796.70,314.97 796.04,314.59 795.38,314.22 794.71,313.85 794.03,313.49 793.35,313.14 792.67,312.78 791.98,312.44 791.29,312.09 790.59,311.76 789.88,311.43 789.17,311.10 788.46,310.78 787.74,310.46 787.02,310.15 786.29,309.84 785.56,309.54 784.83,309.24 784.09,308.95 783.34,308.66 782.59,308.38 781.84,308.10 781.09,307.83 780.33,307.56 779.56,307.30 778.80,307.05 778.03,306.80 777.25,306.55 776.47,306.31 775.69,306.08 774.91,305.85 774.12,305.63 773.33,305.41 772.54,305.20 771.74,305.00 770.94,304.79 770.14,304.60 769.33,304.41 768.52,304.23 767.71,304.05 766.90,303.88 766.08,303.71 765.27,303.55 764.45,303.39 763.62,303.24 762.80,303.10 761.97,302.96 761.14,302.83 760.31,302.70 759.48,302.58 758.65,302.47 757.81,302.36 756.98,302.25 756.14,302.16 755.30,302.07 754.46,301.98 753.62,301.90 752.77,301.83 751.93,301.76 751.08,301.70 750.24,301.64 749.39,301.59 748.54,301.55 747.70,301.51 746.85,301.47 746.00,301.45 745.15,301.43 744.30,301.41 743.45,301.40 742.60,301.40" fill="#4285f4" stroke="#4285f4" stroke-width="0.5"/>
<polygon points="791.90,474.50 790.36,474.82 788.81,475.13 787.26,475.43 785.70,475.72 784.14,476.00 782.58,476.27 781.02,476.53 779.45,476.78 777.87,477.02 776.30,477.25 774.72,477.46 773.13,477.67 771.55,477.87 769.96,478.05 768.37,478.23 766.78,478.39 754.69,419.60 755.49,419.51 756.28,419.43 757.07,419.33 757.87,419.24 758.66,419.13 759.45,419.02 760.24,418.91 761.02,418.79 761.81,418.67 762.59,418.54 763.37,418.40 764.15,418.26 764.93,418.12 765.71,417.97 766.48,417.81 767.25,417.65" fill="#ea4335" stroke="#ea4335" stroke-width="0.5"/>
<polygon points="766.78,478.39 765.22,478.55 763.65,478.69 762.09,478.82 760.52,478.94 751.56,419.87 752.34,419.81 753.13,419.74 753.91,419.67 754.69,419.60" fill="#fbbc04" stroke="#fbbc04" stroke-width="0.5"/>
<polygon points="760.52,478.94 759.46,479.02 751.03,419.91 751.56,419.87" fill="#ff6d01" stroke="#ff6d01" stroke-width="0.5"/>
<polygon points="759.46,479.02 757.84,479.12 756.21,479.22 754.59,479.30 752.96,479.38 747.78,420.09 748.59,420.05 749.41,420.01 750.22,419.96 751.03,419.91" fill="#46bdc6" stroke="#46bdc6" stroke-width="0.5"/>
<polygon points="752.96,479.38 751.26,479.45 749.57,479.50 747.87,479.54 746.17,479.57 744.47,479.59 742.77,479.60 741.07,479.60 739.37,479.58 737.67,479.55 735.97,479.51 734.28,479.46 732.58,479.39 730.88,479.32 729.19,479.23 727.50,479.13 725.80,479.02 724.11,478.90 722.42,478.76 720.74,478.61 719.05,478.46 717.37,478.29 715.69,478.10 714.02,477.91 712.34,477.71 710.67,477.49 709.00,477.26 707.34,477.02 705.68,476.77 704.02,476.50 702.37,476.23 700.72,475.94 699.07,475.64 697.43,475.34 695.80,475.01 694.17,474.68 692.54,474.34 690.92,473.98 689.30,473.62 687.69,473.24 686.08,472.85 684.48,472.45 682.89,472.04 681.30,471.62 679.72,471.18 678.14,470.74 676.57,470.29 675.01,469.82 673.46,469.34 671.91,468.85 670.36,468.36 668.83,467.85 667.30,467.33 665.78,466.80 664.27,466.25 662.76,465.70 661.27,465.14 659.78,464.57 658.30,463.98 656.83,463.39 655.36,462.79 653.91,462.17 652.46,461.55 651.03,460.92 649.60,460.27 648.18,459.62 646.77,458.95 645.37,458.28 643.98,457.60 642.60,456.90 641.23,456.20 639.87,455.49 638.53,454.77 637.19,454.04 635.86,453.30 634.54,452.55 633.23,451.79 631.94,451.02 630.65,450.24 629.38,449.46 628.12,448.66 626.86,447.86 625.62,447.05 624.40,446.23 623.18,445.40 621.98,444.56 620.78,443.72 619.60,442.86 618.44,442.00 617.28,441.13 616.14,440.25 615.01,439.37 613.89,438.47 612.79,437.57 611.69,436.66 610.62,435.74 609.55,434.82 608.50,433.89 607.46,432.95 606.43,432.00 605.42,431.05 604.42,430.09 603.44,429.12 602.47,428.14 601.51,427.16 600.57,426.17 599.64,425.18 598.73,424.18 597.83,423.17 596.94,422.16 596.07,421.14 595.22,420.11 594.38,419.08 593.55,418.05 592.74,417.00 591.94,415.95 591.16,414.90 590.39,413.84 589.64,412.78 588.91,411.71 588.19,410.63 587.48,409.55 586.79,408.47 586.12,407.38 585.46,406.28 584.82,405.18 584.19,404.08 583.58,402.97 582.98,401.86 582.40,400.75 581.84,399.63 581.29,398.50 580.76,397.38 580.25,396.24 579.75,395.11 579.27,393.97 578.80,392.83 578.35,391.69 577.92,390.54 577.50,389.39 577.10,388.23 576.71,387.08 576.35,385.92 575.99,384.76 575.66,383.59 575.34,382.43 575.04,381.26 574.76,380.09 574.49,378.92 574.24,377.74 574.00,376.57 573.79,375.39 573.59,374.21 573.40,373.03 573.24,371.85 573.09,370.67 572.96,369.49 572.84,368.30 572.74,367.12 572.66,365.93 572.59,364.75 572.55,363.56 572.51,362.37 572.50,361.19 572.50,360.00 572.52,358.81 572.56,357.62 572.61,356.44 572.69,355.25 572.77,354.07 572.88,352.88 573.00,351.70 573.14,350.52 573.29,349.33 573.47,348.15 573.66,346.97 573.86,345.80 574.09,344.62 574.33,343.44 574.58,342.27 574.86,341.10 575.15,339.93 575.45,338.76 575.78,337.60 576.12,336.43 576.47,335.27 576.85,334.12 577.24,332.96 577.64,331.81 578.07,330.66 578.51,329.51 578.96,328.37 579.43,327.23 579.92,326.09 580.43,324.96 580.95,323.83 581.48,322.70 582.04,321.58 582.61,320.46 583.19,319.35 583.79,318.24 584.41,317.13 585.04,316.03 585.69,314.93 586.35,313.84 587.03,312.75 587.73,311.67 588.44,310.59 589.16,309.52 589.91,308.45 590.66,307.39 591.43,306.33 592.22,305.28 593.02,304.23 593.84,303.19 594.67,302.15 595.52,301.13 596.38,300.10 597.25,299.08 598.14,298.07 599.05,297.07 599.97,296.07 600.90,295.08 601.85,294.09 602.81,293.11 603.78,292.14 604.77,291.18 605.78,290.22 606.79,289.27 607.82,288.32 608.87,287.39 609.92,286.46 610.99,285.54 676.80,323.17 676.26,323.63 675.73,324.09 675.21,324.56 674.70,325.03 674.19,325.51 673.69,325.99 673.19,326.47 672.70,326.96 672.22,327.45 671.75,327.94 671.28,328.44 670.82,328.93 670.37,329.44 669.93,329.94 669.49,330.45 669.06,330.96 668.64,331.48 668.22,331.99 667.81,332.52 667.41,333.04 667.02,333.56 666.63,334.09 666.25,334.62 665.88,335.16 665.52,335.70 665.16,336.23 664.82,336.78 664.48,337.32 664.14,337.87 663.82,338.41 663.50,338.97 663.20,339.52 662.90,340.07 662.60,340.63 662.32,341.19 662.04,341.75 661.77,342.31 661.51,342.88 661.26,343.45 661.02,344.01 660.78,344.58 660.55,345.16 660.33,345.73 660.12,346.30 659.92,346.88 659.72,347.46 659.54,348.04 659.36,348.62 659.19,349.20 659.03,349.78 658.87,350.36 658.73,350.95 658.59,351.54 658.46,352.12 658.34,352.71 658.23,353.30 658.13,353.89 658.03,354.48 657.95,355.07 657.87,355.66 657.80,356.25 657.74,356.84 657.69,357.43 657.64,358.03 657.61,358.62 657.58,359.21 657.56,359.81 657.55,360.40 657.55,360.99 657.56,361.59 657.57,362.18 657.60,362.77 657.63,363.37 657.67,363.96 657.72,364.55 657.78,365.14 657.84,365.73 657.92,366.33 658.00,366.92 658.09,367.51 658.19,368.10 658.30,368.68 658.42,369.27 658.54,369.86 658.68,370.44 658.82,371.03 658.97,371.61 659.13,372.20 659.30,372.78 659.47,373.36 659.66,373.94 659.85,374.52 660.05,375.09 660.26,375.67 660.47,376.24 660.70,376.82 660.93,377.39 661.17,377.95 661.42,378.52 661.68,379.09 661.95,379.65 662.22,380.21 662.50,380.77 662.79,381.33 663.09,381.89 663.40,382.44 663.71,382.99 664.03,383.54 664.36,384.09 664.70,384.63 665.04,385.18 665.39,385.72 665.75,386.25 666.12,386.79 666.50,387.32 666.88,387.85 667.27,388.38 667.67,388.90 668.08,389.42 668.49,389.94 668.91,390.46 669.34,390.97 669.77,391.48 670.21,391.99 670.66,392.49 671.12,392.99 671.59,393.49 672.06,393.98 672.53,394.47 673.02,394.96 673.51,395.44 674.01,395.92 674.52,396.40 675.03,396.87 675.55,397.34 676.07,397.81 676.61,398.27 677.15,398.73 677.69,399.18 678.25,399.64 678.80,400.08 679.37,400.53 679.94,400.96 680.52,401.40 681.10,401.83 681.69,402.26 682.29,402.68 682.89,403.10 683.50,403.51 684.11,403.92 684.73,404.33 685.36,404.73 685.99,405.13 686.63,405.52 687.27,405.91 687.92,406.29 688.57,406.67 689.23,407.05 689.89,407.42 690.56,407.78 691.24,408.14 691.92,408.50 692.60,408.85 693.29,409.20 693.99,409.54 694.69,409.88 695.39,410.21 696.10,410.54 696.81,410.86 697.53,411.17 698.25,411.49 698.98,411.79 699.71,412.10 700.45,412.39 701.19,412.68 701.93,412.97 702.68,413.25 703.43,413.53 704.19,413.80 704.95,414.06 705.71,414.32 706.48,414.58 707.25,414.83 708.03,415.07 708.81,415.31 709.59,415.54 710.37,415.77 711.16,415.99 711.95,416.21 712.75,416.42 713.54,416.63 714.34,416.83 715.15,417.02 715.95,417.21 716.76,417.39 717.57,417.57 718.38,417.74 719.20,417.91 720.02,418.07 720.84,418.22 721.66,418.37 722.48,418.51 723.31,418.65 724.14,418.78 724.97,418.91 725.80,419.03 726.64,419.14 727.47,419.25 728.31,419.36 729.15,419.45 729.99,419.54 730.83,419.63 731.67,419.71 732.51,419.78 733.36,419.85 734.20,419.91 735.05,419.97 735.89,420.02 736.74,420.06 737.59,420.10 738.44,420.13 739.29,420.15 740.14,420.18 740.99,420.19 741.84,420.20 742.69,420.20 743.53,420.20 744.38,420.19 745.23,420.17 746.08,420.15 746.93,420.12 747.78,420.09" fill="#ab30c4" stroke="#ab30c4" stroke-width="0.5"/>
<polygon points="610.99,285.54 611.06,285.48 676.83,323.14 676.80,323.17" fill="#c0b82a" stroke="#c0b82a" stroke-width="0.5"/>
<polygon points="611.06,285.48 612.08,284.61 677.34,322.71 676.83,323.14" fill="#3b4aab" stroke="#3b4aab" stroke-width="0.5"/>
<polygon points="612.08,284.61 612.63,284.16 677.62,322.48 677.34,322.71" fill="#f272a8" stroke="#f272a8" stroke-width="0.5"/>
<polygon points="612.63,284.16 613.73,283.26 614.84,282.37 615.97,281.48 617.11,280.60 618.26,279.73 619.42,278.87 620.59,278.02 621.78,277.18 622.98,276.34 624.19,275.51 625.41,274.69 626.64,273.88 627.89,273.08 629.14,272.29 630.41,271.50 631.69,270.73 632.98,269.96 634.28,269.20 635.59,268.45 636.91,267.71 638.25,266.98 639.59,266.26 640.94,265.55 642.31,264.85 643.68,264.15 645.06,263.47 646.46,262.80 647.86,262.13 649.27,261.48 650.69,260.84 652.12,260.20 653.56,259.58 655.01,258.96 656.46,258.36 657.93,257.76 659.40,257.18 660.88,256.61 662.37,256.04 663.87,255.49 665.38,254.95 666.89,254.42 668.41,253.90 669.94,253.38 671.47,252.88 673.02,252.40 674.56,251.92 676.12,251.45 677.68,250.99 679.25,250.55 680.83,250.11 682.41,249.69 684.00,249.27 685.59,248.87 687.19,248.48 688.79,248.10 690.40,247.73 692.02,247.37 693.64,247.03 695.26,246.69 696.89,246.37 719.75,303.58 718.93,303.75 718.12,303.91 717.31,304.09 716.50,304.27 715.70,304.45 714.89,304.64 714.09,304.84 713.30,305.04 712.50,305.24 711.71,305.46 710.93,305.67 710.14,305.90 709.36,306.12 708.58,306.36 707.81,306.60 707.04,306.84 706.27,307.09 705.51,307.35 704.74,307.61 703.99,307.87 703.24,308.15 702.49,308.42 701.74,308.70 701.00,308.99 700.26,309.28 699.53,309.58 698.80,309.88 698.08,310.19 697.36,310.50 696.65,310.82 695.93,311.14 695.23,311.47 694.53,311.80 693.83,312.14 693.14,312.48 692.45,312.82 691.77,313.17 691.10,313.53 690.42,313.89 689.76,314.26 689.10,314.63 688.44,315.00 687.79,315.38 687.15,315.76 686.51,316.15 685.87,316.54 685.24,316.94 684.62,317.34 684.00,317.75 683.39,318.16 682.79,318.57 682.19,318.99 681.60,319.41 681.01,319.84 680.43,320.27 679.85,320.70 679.28,321.14 678.72,321.58 678.17,322.03 677.62,322.48" fill="#00695a" stroke="#00695a" stroke-width="0.5"/>
<polygon points="696.89,246.37 698.47,246.07 700.06,245.78 701.64,245.49 703.24,245.22 704.83,244.97 706.43,244.72 708.04,244.48 709.64,244.25 711.25,244.03 712.86,243.83 714.48,243.63 716.10,243.45 729.35,302.13 728.54,302.22 727.73,302.31 726.93,302.42 726.12,302.53 725.32,302.64 724.52,302.76 723.72,302.88 722.92,303.01 722.12,303.15 721.33,303.29 720.54,303.43 719.75,303.58" fill="#c2185b" stroke="#c2185b" stroke-width="0.5"/>
<polygon points="716.10,243.45 717.70,243.28 719.30,243.12 720.91,242.97 722.52,242.83 724.13,242.70 725.74,242.58 727.35,242.48 728.97,242.38 730.59,242.30 732.20,242.22 733.82,242.16 735.44,242.11 739.02,301.45 738.21,301.48 737.40,301.51 736.59,301.55 735.78,301.59 734.98,301.64 734.17,301.69 733.36,301.75 732.56,301.82 731.75,301.88 730.95,301.96 730.15,302.04 729.35,302.13" fill="#4a86f2" stroke="#4a86f2" stroke-width="0.5"/>
<polygon points="735.44,242.11 736.83,242.07 739.71,301.43 739.02,301.45" fill="#db4437" stroke="#db4437" stroke-width="0.5"/>
<polygon points="736.83,242.07 738.27,242.04 739.71,242.02 741.16,242.00 742.60,242.00 742.60,301.40 741.88,301.40 741.16,301.41 740.44,301.42 739.71,301.43" fill="#0f9d58" stroke="#0f9d58" stroke-width="0.5"/>
<line x1="742.60" y1="301.40" x2="742.60" y2="242.00" stroke="rgba(255,255,255,0.35)" stroke-width="0.7"/>
<line x1="767.25" y1="417.65" x2="791.90" y2="474.50" stroke="rgba(255,255,255,0.35)" stroke-width="0.7"/>
<line x1="754.69" y1="419.60" x2="766.78" y2="478.39" stroke="rgba(255,255,255,0.35)" stroke-width="0.7"/>
<line x1="751.56" y1="419.87" x2="760.52" y2="478.94" stroke="rgba(255,255,255,0.35)" stroke-width="0.7"/>
<line x1="751.03" y1="419.91" x2="759.46" y2="479.02" stroke="rgba(255,255,255,0.35)" stroke-width="0.7"/>
<line x1="747.78" y1="420.09" x2="752.96" y2="479.38" stroke="rgba(255,255,255,0.35)" stroke-width="0.7"/>
<line x1="676.80" y1="323.17" x2="610.99" y2="285.54" stroke="rgba(255,255,255,0.35)" stroke-width="0.7"/>
<line x1="676.83" y1="323.14" x2="611.06" y2="285.48" stroke="rgba(255,255,255,0.35)" stroke-width="0.7"/>
<line x1="677.34" y1="322.71" x2="612.08" y2="284.61" stroke="rgba(255,255,255,0.35)" stroke-width="0.7"/>
<line x1="677.62" y1="322.48" x2="612.63" y2="284.16" stroke="rgba(255,255,255,0.35)" stroke-width="0.7"/>
<line x1="719.75" y1="303.58" x2="696.89" y2="246.37" stroke="rgba(255,255,255,0.35)" stroke-width="0.7"/>
<line x1="729.35" y1="302.13" x2="716.10" y2="243.45" stroke="rgba(255,255,255,0.35)" stroke-width="0.7"/>
<line x1="739.02" y1="301.45" x2="735.44" y2="242.11" stroke="rgba(255,255,255,0.35)" stroke-width="0.7"/>
<line x1="739.71" y1="301.43" x2="736.83" y2="242.07" stroke="rgba(255,255,255,0.35)" stroke-width="0.7"/>
<polyline points="912.70,360.80 912.69,361.98 912.67,363.17 912.62,364.35 912.56,365.54 912.49,366.72 912.40,367.90 912.29,369.09 912.16,370.27 912.02,371.45 911.85,372.63 911.68,373.81 911.48,374.98 911.27,376.16 911.04,377.33 910.80,378.51 910.54,379.68 910.26,380.85 909.97,382.01 909.66,383.18 909.33,384.34 908.98,385.50 908.62,386.66 908.24,387.81 907.85,388.97 907.44,390.11 907.01,391.26 906.57,392.41 906.11,393.55 905.63,394.68 905.14,395.82 904.63,396.95 904.11,398.07 903.57,399.20 903.01,400.32 902.44,401.43 901.85,402.54 901.25,403.65 900.63,404.75 899.99,405.85 899.34,406.95 898.68,408.04 897.99,409.12 897.30,410.20 896.58,411.28 895.85,412.35 895.11,413.41 894.35,414.47 893.58,415.52 892.79,416.57 891.99,417.62 891.17,418.65 890.33,419.69 889.48,420.71 888.62,421.73 887.74,422.75 886.85,423.75 885.95,424.76 885.03,425.75 884.09,426.74 883.14,427.72 882.18,428.70 881.20,429.67 880.21,430.63 879.21,431.58 878.19,432.53 877.16,433.47 876.12,434.41 875.06,435.33 873.99,436.25 872.90,437.16 871.81,438.07 870.70,438.96 869.57,439.85 868.44,440.73 867.29,441.60 866.13,442.47 864.96,443.33 863.78,444.17 862.58,445.01 861.37,445.84 860.15,446.67 858.92,447.48 857.67,448.29 856.42,449.09 855.15,449.87 853.88,450.65 852.59,451.42 851.29,452.19 849.98,452.94 848.66,453.68 847.32,454.42 845.98,455.14 844.63,455.86 843.27,456.56 841.89,457.26 840.51,457.95 839.12,458.62 837.72,459.29 836.31,459.95 834.89,460.60 833.46,461.23 832.02,461.86 830.57,462.48 829.11,463.09 827.65,463.68 826.18,464.27 824.69,464.85 823.21,465.41 821.71,465.97 820.20,466.52 818.69,467.05 817.17,467.58 815.64,468.09 814.10,468.59 812.56,469.09 811.01,469.57 809.45,470.04 807.89,470.50 806.32,470.95 804.74,471.39 803.16,471.82 801.57,472.23 799.98,472.64 798.38,473.03 796.77,473.41 795.16,473.79 793.55,474.15 791.93,474.50 790.30,474.83 788.67,475.16 787.03,475.47 785.39,475.78 783.75,476.07 782.10,476.35 780.45,476.62 778.80,476.88 777.14,477.13 775.47,477.36 773.81,477.58 772.14,477.80 770.47,478.00 768.79,478.18 767.11,478.36 765.43,478.52 763.75,478.68 762.07,478.82 760.38,478.95 758.69,479.07 757.00,479.17 755.31,479.27 753.62,479.35 751.93,479.42 750.23,479.48 748.54,479.53 746.84,479.56 745.14,479.59 743.45,479.60 741.75,479.60 740.06,479.59 738.36,479.56 736.66,479.53 734.97,479.48 733.27,479.42 731.58,479.35 729.89,479.27 728.20,479.17 726.51,479.07 724.82,478.95 723.13,478.82 721.45,478.68 719.77,478.52 718.09,478.36 716.41,478.18 714.73,478.00 713.06,477.80 711.39,477.58 709.73,477.36 708.06,477.13 706.40,476.88 704.75,476.62 703.10,476.35 701.45,476.07 699.81,475.78 698.17,475.47 696.53,475.16 694.90,474.83 693.27,474.50 691.65,474.15 690.04,473.79 688.43,473.41 686.82,473.03 685.22,472.64 683.63,472.23 682.04,471.82 680.46,471.39 678.88,470.95 677.31,470.50 675.75,470.04 674.19,469.57 672.64,469.09 671.10,468.59 669.56,468.09 668.03,467.58 666.51,467.05 665.00,466.52 663.49,465.97 661.99,465.41 660.51,464.85 659.02,464.27 657.55,463.68 656.09,463.09 654.63,462.48 653.18,461.86 651.74,461.23 650.31,460.60 648.89,459.95 647.48,459.29 646.08,458.62 644.69,457.95 643.31,457.26 641.93,456.56 640.57,455.86 639.22,455.14 637.88,454.42 636.54,453.68 635.22,452.94 633.91,452.19 632.61,451.42 631.32,450.65 630.05,449.87 628.78,449.09 627.53,448.29 626.28,447.48 625.05,446.67 623.83,445.84 622.62,445.01 621.42,444.17 620.24,443.33 619.07,442.47 617.91,441.60 616.76,440.73 615.63,439.85 614.50,438.96 613.39,438.07 612.30,437.16 611.21,436.25 610.14,435.33 609.08,434.41 608.04,433.47 607.01,432.53 605.99,431.58 604.99,430.63 604.00,429.67 603.02,428.70 602.06,427.72 601.11,426.74 600.17,425.75 599.25,424.76 598.35,423.75 597.46,422.75 596.58,421.73 595.72,420.71 594.87,419.69 594.03,418.65 593.21,417.62 592.41,416.57 591.62,415.52 590.85,414.47 590.09,413.41 589.35,412.35 588.62,411.28 587.90,410.20 587.21,409.12 586.52,408.04 585.86,406.95 585.21,405.85 584.57,404.75 583.95,403.65 583.35,402.54 582.76,401.43 582.19,400.32 581.63,399.20 581.09,398.07 580.57,396.95 580.06,395.82 579.57,394.68 579.09,393.55 578.63,392.41 578.19,391.26 577.76,390.11 577.35,388.97 576.96,387.81 576.58,386.66 576.22,385.50 575.87,384.34 575.54,383.18 575.23,382.01 574.94,380.85 574.66,379.68 574.40,378.51 574.16,377.33 573.93,376.16 573.72,374.98 573.52,373.81 573.35,372.63 573.18,371.45 573.04,370.27 572.91,369.09 572.80,367.90 572.71,366.72 572.64,365.54 572.58,364.35 572.53,363.17 572.51,361.98 572.50,360.80" fill="none" stroke="rgba(255,255,255,0.3)" stroke-width="0.8"/>
<polyline points="657.55,360.80 657.55,360.21 657.57,359.62 657.59,359.02 657.62,358.43 657.66,357.84 657.70,357.25 657.76,356.66 657.82,356.07 657.89,355.48 657.97,354.89 658.06,354.30 658.16,353.71 658.26,353.12 658.38,352.53 658.50,351.95 658.63,351.36 658.77,350.78 658.92,350.19 659.07,349.61 659.24,349.03 659.41,348.45 659.59,347.87 659.78,347.29 659.97,346.72 660.18,346.14 660.39,345.57 660.61,345.00 660.84,344.43 661.08,343.86 661.33,343.29 661.58,342.73 661.84,342.16 662.11,341.60 662.39,341.04 662.68,340.48 662.97,339.93 663.28,339.37 663.59,338.82 663.90,338.27 664.23,337.73 664.56,337.18 664.90,336.64 665.25,336.10 665.61,335.56 665.97,335.03 666.34,334.49 666.72,333.97 667.11,333.44 667.51,332.91 667.91,332.39 668.32,331.87 668.73,331.36 669.16,330.84 669.59,330.33 670.03,329.83 670.47,329.32 670.93,328.82 671.39,328.32 671.85,327.83 672.33,327.34 672.81,326.85 673.30,326.37 673.79,325.89 674.30,325.41 674.80,324.93 675.32,324.46 675.84,324.00 676.37,323.53 676.91,323.07 677.45,322.62 678.00,322.17 678.55,321.72 679.11,321.27 679.68,320.83 680.25,320.40 680.83,319.97 681.42,319.54 682.01,319.11 682.61,318.69 683.21,318.28 683.83,317.87 684.44,317.46 685.06,317.06 685.69,316.66 686.32,316.26 686.96,315.87 687.61,315.49 688.26,315.11 688.91,314.73 689.57,314.36 690.24,313.99 690.91,313.63 691.59,313.27 692.27,312.92 692.95,312.57 693.64,312.23 694.34,311.89 695.04,311.56 695.75,311.23 696.46,310.90 697.17,310.58 697.89,310.27 698.61,309.96 699.34,309.66 700.08,309.36 700.81,309.06 701.55,308.78 702.30,308.49 703.05,308.21 703.80,307.94 704.56,307.67 705.32,307.41 706.08,307.15 706.85,306.90 707.62,306.66 708.39,306.42 709.17,306.18 709.95,305.95 710.74,305.73 711.53,305.51 712.32,305.29 713.11,305.08 713.91,304.88 714.71,304.68 715.51,304.49 716.32,304.31 717.13,304.13 717.94,303.95 718.75,303.78 719.57,303.62 720.38,303.46 721.20,303.31 722.02,303.16 722.85,303.02 723.67,302.89 724.50,302.76 725.33,302.64 726.16,302.52 727.00,302.41 727.83,302.30 728.67,302.20 729.50,302.11 730.34,302.02 731.18,301.94 732.02,301.86 732.87,301.79 733.71,301.73 734.55,301.67 735.40,301.61 736.24,301.57 737.09,301.52 737.94,301.49 738.78,301.46 739.63,301.44 740.48,301.42 741.33,301.41 742.18,301.40 743.02,301.40 743.87,301.41 744.72,301.42 745.57,301.44 746.42,301.46 747.26,301.49 748.11,301.52 748.96,301.57 749.80,301.61 750.65,301.67 751.49,301.73 752.33,301.79 753.18,301.86 754.02,301.94 754.86,302.02 755.70,302.11 756.53,302.20 757.37,302.30 758.20,302.41 759.04,302.52 759.87,302.64 760.70,302.76 761.53,302.89 762.35,303.02 763.18,303.16 764.00,303.31 764.82,303.46 765.63,303.62 766.45,303.78 767.26,303.95 768.07,304.13 768.88,304.31 769.69,304.49 770.49,304.68 771.29,304.88 772.09,305.08 772.88,305.29 773.67,305.51 774.46,305.73 775.25,305.95 776.03,306.18 776.81,306.42 777.58,306.66 778.35,306.90 779.12,307.15 779.88,307.41 780.64,307.67 781.40,307.94 782.15,308.21 782.90,308.49 783.65,308.78 784.39,309.06 785.12,309.36 785.86,309.66 786.59,309.96 787.31,310.27 788.03,310.58 788.74,310.90 789.45,311.23 790.16,311.56 790.86,311.89 791.56,312.23 792.25,312.57 792.93,312.92 793.61,313.27 794.29,313.63 794.96,313.99 795.63,314.36 796.29,314.73 796.94,315.11 797.59,315.49 798.24,315.87 798.88,316.26 799.51,316.66 800.14,317.06 800.76,317.46 801.37,317.87 801.99,318.28 802.59,318.69 803.19,319.11 803.78,319.54 804.37,319.97 804.95,320.40 805.52,320.83 806.09,321.27 806.65,321.72 807.20,322.17 807.75,322.62 808.29,323.07 808.83,323.53 809.36,324.00 809.88,324.46 810.40,324.93 810.90,325.41 811.41,325.89 811.90,326.37 812.39,326.85 812.87,327.34 813.35,327.83 813.81,328.32 814.27,328.82 814.73,329.32 815.17,329.83 815.61,330.33 816.04,330.84 816.47,331.36 816.88,331.87 817.29,332.39 817.69,332.91 818.09,333.44 818.48,333.97 818.86,334.49 819.23,335.03 819.59,335.56 819.95,336.10 820.30,336.64 820.64,337.18 820.97,337.73 821.30,338.27 821.61,338.82 821.92,339.37 822.23,339.93 822.52,340.48 822.81,341.04 823.09,341.60 823.36,342.16 823.62,342.73 823.87,343.29 824.12,343.86 824.36,344.43 824.59,345.00 824.81,345.57 825.02,346.14 825.23,346.72 825.42,347.29 825.61,347.87 825.79,348.45 825.96,349.03 826.13,349.61 826.28,350.19 826.43,350.78 826.57,351.36 826.70,351.95 826.82,352.53 826.94,353.12 827.04,353.71 827.14,354.30 827.23,354.89 827.31,355.48 827.38,356.07 827.44,356.66 827.50,357.25 827.54,357.84 827.58,358.43 827.61,359.02 827.63,359.62 827.65,360.21 827.65,360.80" fill="none" stroke="rgba(255,255,255,0.3)" stroke-width="0.8"/>
<text x="872" y="351.8" fill="#fff" font-weight="bold" font-size="13.8" text-anchor="middle">html</text>
<text x="629" y="405.8" fill="#fff" font-weight="bold" font-size="13.8" text-anchor="middle">kép</text>
<text x="673" y="290" fill="#fff" font-weight="bold" font-size="13.8" text-anchor="middle">json</text>
<rect x="982.5" y="131.5" width="462" height="451" fill="#fefeec" stroke="#8f8f8f" stroke-width="1.7"/>
<text transform="translate(1005.6,170.5) scale(0.844,1)" font-size="19.4" fill="#1f5ba6">Főbb fájltípusok méret szerinti megoszlása (GB)</text>
<circle cx="1011.7" cy="195.3" r="6" fill="#4285f4"/>
<text transform="translate(1025.8,198.00) scale(0.82,1)" font-size="10.7" fill="#444">html</text>
<circle cx="1011.7" cy="217.3" r="6" fill="#ea4335"/>
<text transform="translate(1025.8,220.00) scale(0.82,1)" font-size="10.7" fill="#444">xml</text>
<circle cx="1011.7" cy="239.3" r="6" fill="#fbbc04"/>
<text transform="translate(1025.8,242.00) scale(0.82,1)" font-size="10.7" fill="#444">pdf</text>
<circle cx="1011.7" cy="261.3" r="6" fill="#ff6d01"/>
<text transform="translate(1025.8,264.00) scale(0.82,1)" font-size="10.7" fill="#444">office</text>
<circle cx="1011.7" cy="283.3" r="6" fill="#46bdc6"/>
<text transform="translate(1025.8,286.00) scale(0.82,1)" font-size="10.7" fill="#444">text</text>
<circle cx="1011.7" cy="305.3" r="6" fill="#ab30c4"/>
<text transform="translate(1025.8,308.00) scale(0.82,1)" font-size="10.7" fill="#444">kép</text>
<circle cx="1011.7" cy="327.3" r="6" fill="#c0b82a"/>
<text transform="translate(1025.8,330.00) scale(0.82,1)" font-size="10.7" fill="#444">audió</text>
<circle cx="1011.7" cy="349.3" r="6" fill="#3b4aab"/>
<text transform="translate(1025.8,352.00) scale(0.82,1)" font-size="10.7" fill="#444">videó</text>
<circle cx="1011.7" cy="371.3" r="6" fill="#f272a8"/>
<text transform="translate(1025.8,374.00) scale(0.82,1)" font-size="10.7" fill="#444">bitstream</text>
<circle cx="1011.7" cy="393.3" r="6" fill="#00695a"/>
<text transform="translate(1025.8,396.00) scale(0.82,1)" font-size="10.7" fill="#444">json</text>
<circle cx="1011.7" cy="415.3" r="6" fill="#c2185b"/>
<text transform="translate(1025.8,418.00) scale(0.82,1)" font-size="10.7" fill="#444">javascript</text>
<circle cx="1011.7" cy="437.3" r="6" fill="#4a86f2"/>
<text transform="translate(1025.8,440.00) scale(0.82,1)" font-size="10.7" fill="#444">css</text>
<circle cx="1011.7" cy="459.3" r="6" fill="#db4437"/>
<text transform="translate(1025.8,462.00) scale(0.82,1)" font-size="10.7" fill="#444">font</text>
<circle cx="1011.7" cy="481.3" r="6" fill="#f4b400"/>
<text transform="translate(1025.8,484.00) scale(0.82,1)" font-size="10.7" fill="#444">tömörített</text>
<circle cx="1011.7" cy="503.3" r="6" fill="#0f9d58"/>
<text transform="translate(1025.8,506.00) scale(0.82,1)" font-size="10.7" fill="#444">ismeretlen</text>
<circle cx="1011.7" cy="525.3" r="6" fill="#ff6d00"/>
<text transform="translate(1025.8,528.00) scale(0.82,1)" font-size="10.7" fill="#444">egyéb</text>
<polygon points="1422.10,361.90 1422.09,363.04 1422.07,364.19 1422.03,365.33 1421.97,366.48 1421.90,367.62 1421.81,368.76 1421.70,369.91 1421.58,371.05 1421.44,372.19 1421.29,373.33 1421.12,374.47 1420.93,375.61 1420.72,376.74 1420.51,377.88 1420.27,379.01 1420.02,380.14 1419.75,381.27 1419.47,382.40 1419.17,383.52 1418.85,384.65 1418.52,385.77 1418.17,386.89 1417.81,388.00 1417.43,389.12 1417.03,390.23 1416.62,391.34 1416.20,392.44 1415.75,393.54 1415.29,394.64 1414.82,395.74 1414.33,396.83 1413.83,397.92 1413.31,399.01 1412.77,400.09 1412.22,401.17 1411.65,402.24 1411.07,403.31 1411.07,428.31 1411.65,427.24 1412.22,426.17 1412.77,425.09 1413.31,424.01 1413.83,422.92 1414.33,421.83 1414.82,420.74 1415.29,419.64 1415.75,418.54 1416.20,417.44 1416.62,416.34 1417.03,415.23 1417.43,414.12 1417.81,413.00 1418.17,411.89 1418.52,410.77 1418.85,409.65 1419.17,408.52 1419.47,407.40 1419.75,406.27 1420.02,405.14 1420.27,404.01 1420.51,402.88 1420.72,401.74 1420.93,400.61 1421.12,399.47 1421.29,398.33 1421.44,397.19 1421.58,396.05 1421.70,394.91 1421.81,393.76 1421.90,392.62 1421.97,391.48 1422.03,390.33 1422.07,389.19 1422.09,388.04 1422.10,386.90" fill="#2e5daa" stroke="#2e5daa" stroke-width="0.6"/>
<polygon points="1411.07,403.31 1410.58,404.19 1410.58,429.19 1411.07,428.31" fill="#a32e25" stroke="#a32e25" stroke-width="0.6"/>
<polygon points="1410.58,404.19 1409.98,405.23 1409.37,406.27 1408.75,407.30 1408.11,408.33 1407.45,409.35 1406.78,410.37 1406.10,411.39 1405.40,412.40 1404.69,413.40 1403.97,414.40 1403.23,415.40 1402.47,416.39 1401.71,417.38 1400.93,418.36 1400.13,419.33 1399.33,420.30 1398.51,421.27 1397.67,422.22 1396.82,423.18 1395.96,424.12 1395.09,425.07 1394.20,426.00 1393.30,426.93 1392.39,427.85 1391.46,428.77 1391.46,453.77 1392.39,452.85 1393.30,451.93 1394.20,451.00 1395.09,450.07 1395.96,449.12 1396.82,448.18 1397.67,447.22 1398.51,446.27 1399.33,445.30 1400.13,444.33 1400.93,443.36 1401.71,442.38 1402.47,441.39 1403.23,440.40 1403.97,439.40 1404.69,438.40 1405.40,437.40 1406.10,436.39 1406.78,435.37 1407.45,434.35 1408.11,433.33 1408.75,432.30 1409.37,431.27 1409.98,430.23 1410.58,429.19" fill="#af8302" stroke="#af8302" stroke-width="0.6"/>
<polygon points="1391.46,428.77 1390.77,429.45 1390.06,430.12 1390.06,455.12 1390.77,454.45 1391.46,453.77" fill="#b24c00" stroke="#b24c00" stroke-width="0.6"/>
<polygon points="1390.06,430.12 1390.00,430.18 1390.00,455.18 1390.06,455.12" fill="#31848a" stroke="#31848a" stroke-width="0.6"/>
<polygon points="1390.00,430.18 1389.02,431.10 1388.02,432.02 1387.01,432.93 1385.98,433.84 1384.95,434.73 1383.90,435.62 1382.83,436.50 1381.76,437.38 1380.67,438.25 1379.57,439.10 1378.46,439.96 1377.34,440.80 1376.20,441.64 1375.05,442.46 1373.89,443.28 1372.72,444.10 1371.54,444.90 1370.34,445.70 1369.14,446.48 1367.92,447.26 1366.69,448.03 1365.45,448.79 1364.20,449.55 1362.94,450.29 1361.67,451.03 1360.39,451.75 1359.10,452.47 1357.79,453.18 1356.48,453.88 1355.16,454.57 1353.83,455.25 1352.48,455.92 1351.13,456.58 1349.77,457.23 1348.40,457.88 1347.02,458.51 1345.63,459.13 1344.24,459.75 1342.83,460.35 1341.42,460.95 1339.99,461.53 1338.56,462.11 1337.12,462.67 1335.67,463.23 1334.22,463.77 1332.76,464.31 1331.29,464.83 1329.81,465.34 1328.32,465.85 1326.83,466.34 1325.33,466.82 1323.82,467.30 1322.31,467.76 1320.79,468.21 1319.27,468.65 1317.73,469.08 1316.19,469.50 1314.65,469.91 1313.10,470.31 1311.54,470.69 1309.98,471.07 1308.42,471.43 1306.85,471.79 1305.27,472.13 1303.69,472.46 1302.10,472.79 1300.51,473.10 1298.92,473.39 1297.32,473.68 1295.71,473.96 1294.11,474.23 1292.50,474.48 1290.88,474.72 1289.26,474.95 1287.64,475.18 1286.02,475.38 1284.39,475.58 1282.76,475.77 1281.13,475.94 1279.50,476.11 1277.86,476.26 1276.22,476.40 1274.58,476.53 1272.94,476.65 1271.29,476.76 1269.64,476.85 1268.00,476.94 1266.35,477.01 1264.70,477.07 1263.05,477.12 1261.40,477.16 1259.75,477.18 1258.10,477.20 1256.45,477.20 1254.79,477.19 1253.14,477.17 1251.49,477.14 1249.84,477.10 1248.19,477.04 1246.54,476.98 1244.89,476.90 1243.25,476.81 1241.60,476.71 1239.96,476.60 1238.32,476.48 1236.68,476.34 1235.04,476.20 1233.40,476.04 1231.77,475.87 1230.14,475.69 1228.51,475.50 1226.88,475.30 1225.26,475.08 1223.64,474.86 1222.02,474.62 1220.41,474.37 1218.80,474.11 1217.20,473.84 1215.59,473.56 1214.00,473.27 1212.40,472.96 1210.82,472.65 1209.23,472.32 1207.65,471.99 1206.08,471.64 1204.51,471.28 1202.94,470.91 1201.39,470.53 1199.83,470.14 1198.28,469.73 1196.74,469.32 1195.21,468.90 1193.68,468.46 1192.15,468.02 1190.64,467.56 1189.13,467.10 1187.62,466.62 1186.13,466.13 1184.64,465.63 1183.16,465.13 1181.68,464.61 1180.21,464.08 1178.75,463.54 1177.30,462.99 1175.86,462.43 1174.42,461.86 1172.99,461.28 1171.57,460.69 1170.16,460.10 1168.76,459.49 1167.37,458.87 1165.98,458.24 1164.61,457.60 1163.24,456.95 1161.89,456.30 1160.54,455.63 1159.20,454.96 1157.87,454.27 1156.55,453.58 1155.25,452.87 1153.95,452.16 1152.66,451.44 1151.38,450.71 1150.12,449.97 1148.86,449.22 1147.61,448.47 1146.38,447.70 1145.16,446.93 1143.94,446.15 1142.74,445.35 1141.55,444.56 1140.37,443.75 1139.21,442.93 1138.05,442.11 1136.91,441.28 1135.78,440.44 1134.66,439.59 1133.55,438.74 1132.46,437.87 1131.38,437.00 1130.31,436.13 1129.25,435.24 1128.21,434.35 1127.18,433.45 1126.16,432.54 1125.15,431.63 1124.16,430.71 1123.18,429.78 1122.21,428.84 1121.26,427.90 1120.32,426.95 1119.40,426.00 1118.49,425.04 1117.59,424.07 1116.71,423.10 1115.84,422.12 1114.98,421.13 1114.14,420.14 1113.31,419.15 1112.50,418.14 1111.70,417.13 1110.92,416.12 1110.15,415.10 1109.39,414.08 1108.65,413.05 1107.93,412.01 1107.22,410.97 1106.52,409.93 1105.84,408.88 1105.18,407.82 1104.53,406.76 1103.89,405.70 1103.27,404.63 1102.67,403.56 1102.08,402.48 1101.50,401.40 1100.95,400.32 1100.40,399.23 1099.88,398.14 1099.37,397.04 1098.87,395.95 1098.39,394.84 1097.93,393.74 1097.48,392.63 1097.05,391.52 1096.63,390.40 1096.23,389.28 1095.85,388.16 1095.48,387.04 1095.13,385.92 1094.79,384.79 1094.47,383.66 1094.17,382.52 1093.88,381.39 1093.61,380.25 1093.35,379.12 1093.11,377.98 1092.89,376.83 1092.69,375.69 1092.50,374.55 1092.32,373.40 1092.17,372.25 1092.03,371.11 1091.90,369.96 1091.80,368.81 1091.71,367.66 1091.63,366.51 1091.57,365.36 1091.53,364.20 1091.51,363.05 1091.50,361.90 1091.50,386.90 1091.51,388.05 1091.53,389.20 1091.57,390.36 1091.63,391.51 1091.71,392.66 1091.80,393.81 1091.90,394.96 1092.03,396.11 1092.17,397.25 1092.32,398.40 1092.50,399.55 1092.69,400.69 1092.89,401.83 1093.11,402.98 1093.35,404.12 1093.61,405.25 1093.88,406.39 1094.17,407.52 1094.47,408.66 1094.79,409.79 1095.13,410.92 1095.48,412.04 1095.85,413.16 1096.23,414.28 1096.63,415.40 1097.05,416.52 1097.48,417.63 1097.93,418.74 1098.39,419.84 1098.87,420.95 1099.37,422.04 1099.88,423.14 1100.40,424.23 1100.95,425.32 1101.50,426.40 1102.08,427.48 1102.67,428.56 1103.27,429.63 1103.89,430.70 1104.53,431.76 1105.18,432.82 1105.84,433.88 1106.52,434.93 1107.22,435.97 1107.93,437.01 1108.65,438.05 1109.39,439.08 1110.15,440.10 1110.92,441.12 1111.70,442.13 1112.50,443.14 1113.31,444.15 1114.14,445.14 1114.98,446.13 1115.84,447.12 1116.71,448.10 1117.59,449.07 1118.49,450.04 1119.40,451.00 1120.32,451.95 1121.26,452.90 1122.21,453.84 1123.18,454.78 1124.16,455.71 1125.15,456.63 1126.16,457.54 1127.18,458.45 1128.21,459.35 1129.25,460.24 1130.31,461.13 1131.38,462.00 1132.46,462.87 1133.55,463.74 1134.66,464.59 1135.78,465.44 1136.91,466.28 1138.05,467.11 1139.21,467.93 1140.37,468.75 1141.55,469.56 1142.74,470.35 1143.94,471.15 1145.16,471.93 1146.38,472.70 1147.61,473.47 1148.86,474.22 1150.12,474.97 1151.38,475.71 1152.66,476.44 1153.95,477.16 1155.25,477.87 1156.55,478.58 1157.87,479.27 1159.20,479.96 1160.54,480.63 1161.89,481.30 1163.24,481.95 1164.61,482.60 1165.98,483.24 1167.37,483.87 1168.76,484.49 1170.16,485.10 1171.57,485.69 1172.99,486.28 1174.42,486.86 1175.86,487.43 1177.30,487.99 1178.75,488.54 1180.21,489.08 1181.68,489.61 1183.16,490.13 1184.64,490.63 1186.13,491.13 1187.62,491.62 1189.13,492.10 1190.64,492.56 1192.15,493.02 1193.68,493.46 1195.21,493.90 1196.74,494.32 1198.28,494.73 1199.83,495.14 1201.39,495.53 1202.94,495.91 1204.51,496.28 1206.08,496.64 1207.65,496.99 1209.23,497.32 1210.82,497.65 1212.40,497.96 1214.00,498.27 1215.59,498.56 1217.20,498.84 1218.80,499.11 1220.41,499.37 1222.02,499.62 1223.64,499.86 1225.26,500.08 1226.88,500.30 1228.51,500.50 1230.14,500.69 1231.77,500.87 1233.40,501.04 1235.04,501.20 1236.68,501.34 1238.32,501.48 1239.96,501.60 1241.60,501.71 1243.25,501.81 1244.89,501.90 1246.54,501.98 1248.19,502.04 1249.84,502.10 1251.49,502.14 1253.14,502.17 1254.79,502.19 1256.45,502.20 1258.10,502.20 1259.75,502.18 1261.40,502.16 1263.05,502.12 1264.70,502.07 1266.35,502.01 1268.00,501.94 1269.64,501.85 1271.29,501.76 1272.94,501.65 1274.58,501.53 1276.22,501.40 1277.86,501.26 1279.50,501.11 1281.13,500.94 1282.76,500.77 1284.39,500.58 1286.02,500.38 1287.64,500.18 1289.26,499.95 1290.88,499.72 1292.50,499.48 1294.11,499.23 1295.71,498.96 1297.32,498.68 1298.92,498.39 1300.51,498.10 1302.10,497.79 1303.69,497.46 1305.27,497.13 1306.85,496.79 1308.42,496.43 1309.98,496.07 1311.54,495.69 1313.10,495.31 1314.65,494.91 1316.19,494.50 1317.73,494.08 1319.27,493.65 1320.79,493.21 1322.31,492.76 1323.82,492.30 1325.33,491.82 1326.83,491.34 1328.32,490.85 1329.81,490.34 1331.29,489.83 1332.76,489.31 1334.22,488.77 1335.67,488.23 1337.12,487.67 1338.56,487.11 1339.99,486.53 1341.42,485.95 1342.83,485.35 1344.24,484.75 1345.63,484.13 1347.02,483.51 1348.40,482.88 1349.77,482.23 1351.13,481.58 1352.48,480.92 1353.83,480.25 1355.16,479.57 1356.48,478.88 1357.79,478.18 1359.10,477.47 1360.39,476.75 1361.67,476.03 1362.94,475.29 1364.20,474.55 1365.45,473.79 1366.69,473.03 1367.92,472.26 1369.14,471.48 1370.34,470.70 1371.54,469.90 1372.72,469.10 1373.89,468.28 1375.05,467.46 1376.20,466.64 1377.34,465.80 1378.46,464.96 1379.57,464.10 1380.67,463.25 1381.76,462.38 1382.83,461.50 1383.90,460.62 1384.95,459.73 1385.98,458.84 1387.01,457.93 1388.02,457.02 1389.02,456.10 1390.00,455.18" fill="#772189" stroke="#772189" stroke-width="0.6"/>
<polygon points="1256.80,304.25 1257.62,304.25 1258.44,304.26 1259.26,304.28 1260.09,304.30 1260.91,304.32 1261.73,304.35 1262.55,304.39 1263.37,304.43 1264.19,304.48 1265.00,304.53 1265.82,304.59 1266.64,304.66 1267.45,304.73 1268.27,304.81 1269.08,304.89 1269.89,304.98 1270.70,305.07 1271.51,305.17 1272.32,305.28 1273.13,305.39 1273.93,305.50 1274.73,305.62 1275.53,305.75 1276.33,305.88 1277.13,306.02 1277.93,306.17 1278.72,306.31 1279.51,306.47 1280.30,306.63 1281.09,306.80 1281.87,306.97 1282.65,307.14 1283.43,307.32 1284.21,307.51 1284.98,307.70 1285.75,307.90 1286.52,308.11 1287.29,308.32 1288.05,308.53 1288.81,308.75 1289.56,308.97 1290.32,309.20 1291.07,309.44 1291.81,309.68 1292.55,309.92 1293.29,310.17 1294.03,310.43 1294.76,310.69 1295.49,310.96 1296.21,311.23 1296.93,311.50 1297.65,311.78 1298.36,312.07 1299.07,312.36 1299.77,312.66 1300.47,312.96 1301.17,313.26 1301.86,313.57 1302.55,313.89 1303.23,314.21 1303.91,314.53 1304.58,314.86 1305.25,315.19 1305.91,315.53 1306.57,315.87 1307.22,316.22 1307.87,316.57 1308.51,316.93 1309.15,317.29 1309.79,317.66 1310.41,318.03 1311.04,318.40 1311.65,318.78 1312.27,319.16 1312.87,319.55 1313.47,319.94 1314.07,320.33 1314.66,320.73 1315.24,321.14 1315.82,321.54 1316.39,321.95 1316.96,322.37 1317.52,322.79 1318.07,323.21 1318.62,323.64 1319.16,324.07 1319.70,324.50 1320.23,324.94 1320.75,325.38 1321.27,325.83 1321.78,326.28 1322.29,326.73 1322.79,327.19 1323.28,327.64 1323.76,328.11 1324.24,328.57 1324.71,329.04 1325.18,329.51 1325.63,329.99 1326.09,330.47 1326.53,330.95 1326.97,331.44 1327.40,331.92 1327.82,332.42 1328.24,332.91 1328.65,333.41 1329.05,333.91 1329.45,334.41 1329.84,334.91 1330.22,335.42 1330.59,335.93 1330.96,336.44 1331.32,336.96 1331.67,337.48 1332.01,338.00 1332.35,338.52 1332.68,339.05 1333.00,339.57 1333.31,340.10 1333.62,340.63 1333.92,341.17 1334.21,341.70 1334.50,342.24 1334.77,342.78 1335.04,343.32 1335.30,343.87 1335.56,344.41 1335.80,344.96 1336.04,345.51 1336.27,346.06 1336.49,346.61 1336.70,347.16 1336.91,347.72 1337.11,348.27 1337.30,348.83 1337.48,349.39 1337.66,349.95 1337.82,350.51 1337.98,351.07 1338.13,351.64 1338.27,352.20 1338.41,352.77 1338.53,353.33 1338.65,353.90 1338.76,354.47 1338.86,355.04 1338.96,355.61 1339.04,356.18 1339.12,356.75 1339.19,357.32 1339.25,357.89 1339.30,358.46 1339.35,359.04 1339.38,359.61 1339.41,360.18 1339.43,360.75 1339.45,361.33 1339.45,361.90 1339.45,386.90 1339.45,386.33 1339.43,385.75 1339.41,385.18 1339.38,384.61 1339.35,384.04 1339.30,383.46 1339.25,382.89 1339.19,382.32 1339.12,381.75 1339.04,381.18 1338.96,380.61 1338.86,380.04 1338.76,379.47 1338.65,378.90 1338.53,378.33 1338.41,377.77 1338.27,377.20 1338.13,376.64 1337.98,376.07 1337.82,375.51 1337.66,374.95 1337.48,374.39 1337.30,373.83 1337.11,373.27 1336.91,372.72 1336.70,372.16 1336.49,371.61 1336.27,371.06 1336.04,370.51 1335.80,369.96 1335.56,369.41 1335.30,368.87 1335.04,368.32 1334.77,367.78 1334.50,367.24 1334.21,366.70 1333.92,366.17 1333.62,365.63 1333.31,365.10 1333.00,364.57 1332.68,364.05 1332.35,363.52 1332.01,363.00 1331.67,362.48 1331.32,361.96 1330.96,361.44 1330.59,360.93 1330.22,360.42 1329.84,359.91 1329.45,359.41 1329.05,358.91 1328.65,358.41 1328.24,357.91 1327.82,357.42 1327.40,356.92 1326.97,356.44 1326.53,355.95 1326.09,355.47 1325.63,354.99 1325.18,354.51 1324.71,354.04 1324.24,353.57 1323.76,353.11 1323.28,352.64 1322.79,352.19 1322.29,351.73 1321.78,351.28 1321.27,350.83 1320.75,350.38 1320.23,349.94 1319.70,349.50 1319.16,349.07 1318.62,348.64 1318.07,348.21 1317.52,347.79 1316.96,347.37 1316.39,346.95 1315.82,346.54 1315.24,346.14 1314.66,345.73 1314.07,345.33 1313.47,344.94 1312.87,344.55 1312.27,344.16 1311.65,343.78 1311.04,343.40 1310.41,343.03 1309.79,342.66 1309.15,342.29 1308.51,341.93 1307.87,341.57 1307.22,341.22 1306.57,340.87 1305.91,340.53 1305.25,340.19 1304.58,339.86 1303.91,339.53 1303.23,339.21 1302.55,338.89 1301.86,338.57 1301.17,338.26 1300.47,337.96 1299.77,337.66 1299.07,337.36 1298.36,337.07 1297.65,336.78 1296.93,336.50 1296.21,336.23 1295.49,335.96 1294.76,335.69 1294.03,335.43 1293.29,335.17 1292.55,334.92 1291.81,334.68 1291.07,334.44 1290.32,334.20 1289.56,333.97 1288.81,333.75 1288.05,333.53 1287.29,333.32 1286.52,333.11 1285.75,332.90 1284.98,332.70 1284.21,332.51 1283.43,332.32 1282.65,332.14 1281.87,331.97 1281.09,331.80 1280.30,331.63 1279.51,331.47 1278.72,331.31 1277.93,331.17 1277.13,331.02 1276.33,330.88 1275.53,330.75 1274.73,330.62 1273.93,330.50 1273.13,330.39 1272.32,330.28 1271.51,330.17 1270.70,330.07 1269.89,329.98 1269.08,329.89 1268.27,329.81 1267.45,329.73 1266.64,329.66 1265.82,329.59 1265.00,329.53 1264.19,329.48 1263.37,329.43 1262.55,329.39 1261.73,329.35 1260.91,329.32 1260.09,329.30 1259.26,329.28 1258.44,329.26 1257.62,329.25 1256.80,329.25" fill="#2e5daa" stroke="#2e5daa" stroke-width="0.6"/>
<polygon points="1174.15,361.90 1174.15,361.33 1174.17,360.75 1174.19,360.18 1174.22,359.60 1174.25,359.03 1174.30,358.46 1174.35,357.89 1174.41,357.31 1174.48,356.74 1174.56,356.17 1174.65,355.60 1174.74,355.03 1174.84,354.46 1174.95,353.89 1175.07,353.32 1175.20,352.75 1175.33,352.19 1175.47,351.62 1175.62,351.06 1175.78,350.50 1175.95,349.93 1176.12,349.37 1176.31,348.81 1176.50,348.25 1176.70,347.70 1176.90,347.14 1177.12,346.59 1177.34,346.04 1177.57,345.48 1177.81,344.93 1178.06,344.39 1178.31,343.84 1178.57,343.30 1178.84,342.75 1179.12,342.21 1179.40,341.68 1179.70,341.14 1180.00,340.60 1180.30,340.07 1180.62,339.54 1180.94,339.01 1181.27,338.49 1181.61,337.97 1181.96,337.44 1182.31,336.93 1182.67,336.41 1183.04,335.90 1183.41,335.38 1183.79,334.88 1184.18,334.37 1184.58,333.87 1184.98,333.37 1185.39,332.87 1185.81,332.38 1186.24,331.88 1186.67,331.40 1187.11,330.91 1187.55,330.43 1188.01,329.95 1188.46,329.47 1188.93,329.00 1189.40,328.53 1189.88,328.06 1190.37,327.60 1190.86,327.14 1191.36,326.68 1191.87,326.23 1192.38,325.78 1192.90,325.34 1193.42,324.89 1193.96,324.46 1194.49,324.02 1195.04,323.59 1195.59,323.16 1196.14,322.74 1196.71,322.32 1197.27,321.91 1197.85,321.49 1198.43,321.09 1199.01,320.68 1199.60,320.28 1200.20,319.89 1200.80,319.50 1201.41,319.11 1202.02,318.73 1202.64,318.35 1203.27,317.98 1203.90,317.61 1204.53,317.24 1205.17,316.88 1205.82,316.53 1206.47,316.17 1207.12,315.83 1207.78,315.48 1208.45,315.15 1209.12,314.81 1209.79,314.48 1210.47,314.16 1211.15,313.84 1211.84,313.52 1212.54,313.21 1213.23,312.91 1213.93,312.61 1214.64,312.31 1215.35,312.02 1216.06,311.74 1216.78,311.46 1217.50,311.18 1218.23,310.91 1218.96,310.65 1219.69,310.39 1220.43,310.13 1221.17,309.88 1221.92,309.64 1222.66,309.40 1223.41,309.16 1224.17,308.93 1224.93,308.71 1225.69,308.49 1226.45,308.28 1227.22,308.07 1227.99,307.87 1228.76,307.67 1229.54,307.48 1230.31,307.29 1231.09,307.11 1231.88,306.93 1232.66,306.76 1233.45,306.60 1234.24,306.44 1234.24,331.44 1233.45,331.60 1232.66,331.76 1231.88,331.93 1231.09,332.11 1230.31,332.29 1229.54,332.48 1228.76,332.67 1227.99,332.87 1227.22,333.07 1226.45,333.28 1225.69,333.49 1224.93,333.71 1224.17,333.93 1223.41,334.16 1222.66,334.40 1221.92,334.64 1221.17,334.88 1220.43,335.13 1219.69,335.39 1218.96,335.65 1218.23,335.91 1217.50,336.18 1216.78,336.46 1216.06,336.74 1215.35,337.02 1214.64,337.31 1213.93,337.61 1213.23,337.91 1212.54,338.21 1211.84,338.52 1211.15,338.84 1210.47,339.16 1209.79,339.48 1209.12,339.81 1208.45,340.15 1207.78,340.48 1207.12,340.83 1206.47,341.17 1205.82,341.53 1205.17,341.88 1204.53,342.24 1203.90,342.61 1203.27,342.98 1202.64,343.35 1202.02,343.73 1201.41,344.11 1200.80,344.50 1200.20,344.89 1199.60,345.28 1199.01,345.68 1198.43,346.09 1197.85,346.49 1197.27,346.91 1196.71,347.32 1196.14,347.74 1195.59,348.16 1195.04,348.59 1194.49,349.02 1193.96,349.46 1193.42,349.89 1192.90,350.34 1192.38,350.78 1191.87,351.23 1191.36,351.68 1190.86,352.14 1190.37,352.60 1189.88,353.06 1189.40,353.53 1188.93,354.00 1188.46,354.47 1188.01,354.95 1187.55,355.43 1187.11,355.91 1186.67,356.40 1186.24,356.88 1185.81,357.38 1185.39,357.87 1184.98,358.37 1184.58,358.87 1184.18,359.37 1183.79,359.88 1183.41,360.38 1183.04,360.90 1182.67,361.41 1182.31,361.93 1181.96,362.44 1181.61,362.97 1181.27,363.49 1180.94,364.01 1180.62,364.54 1180.30,365.07 1180.00,365.60 1179.70,366.14 1179.40,366.68 1179.12,367.21 1178.84,367.75 1178.57,368.30 1178.31,368.84 1178.06,369.39 1177.81,369.93 1177.57,370.48 1177.34,371.04 1177.12,371.59 1176.90,372.14 1176.70,372.70 1176.50,373.25 1176.31,373.81 1176.12,374.37 1175.95,374.93 1175.78,375.50 1175.62,376.06 1175.47,376.62 1175.33,377.19 1175.20,377.75 1175.07,378.32 1174.95,378.89 1174.84,379.46 1174.74,380.03 1174.65,380.60 1174.56,381.17 1174.48,381.74 1174.41,382.31 1174.35,382.89 1174.30,383.46 1174.25,384.03 1174.22,384.60 1174.19,385.18 1174.17,385.75 1174.15,386.33 1174.15,386.90" fill="#772189" stroke="#772189" stroke-width="0.6"/>
<polygon points="1234.24,306.44 1234.99,306.29 1235.75,306.15 1235.75,331.15 1234.99,331.29 1234.24,331.44" fill="#86801d" stroke="#86801d" stroke-width="0.6"/>
<polygon points="1235.75,306.15 1236.54,306.01 1237.35,305.87 1238.15,305.74 1238.95,305.61 1239.76,305.49 1240.57,305.37 1241.38,305.26 1242.19,305.16 1243.01,305.06 1243.82,304.97 1243.82,329.97 1243.01,330.06 1242.19,330.16 1241.38,330.26 1240.57,330.37 1239.76,330.49 1238.95,330.61 1238.15,330.74 1237.35,330.87 1236.54,331.01 1235.75,331.15" fill="#293377" stroke="#293377" stroke-width="0.6"/>
<polygon points="1243.82,304.97 1244.49,304.89 1245.16,304.83 1245.16,329.83 1244.49,329.89 1243.82,329.97" fill="#a94f75" stroke="#a94f75" stroke-width="0.6"/>
<polygon points="1245.16,304.83 1245.74,304.77 1246.32,304.72 1246.91,304.66 1246.91,329.66 1246.32,329.72 1245.74,329.77 1245.16,329.83" fill="#00493e" stroke="#00493e" stroke-width="0.6"/>
<polygon points="1246.91,304.66 1247.67,304.60 1248.43,304.55 1249.19,304.49 1249.95,304.45 1249.95,329.45 1249.19,329.49 1248.43,329.55 1247.67,329.60 1246.91,329.66" fill="#87103f" stroke="#87103f" stroke-width="0.6"/>
<polygon points="1249.95,304.45 1250.77,304.40 1251.59,304.36 1252.41,304.33 1253.23,304.30 1254.05,304.28 1254.05,329.28 1253.23,329.30 1252.41,329.33 1251.59,329.36 1250.77,329.40 1249.95,329.45" fill="#335da9" stroke="#335da9" stroke-width="0.6"/>
<polygon points="1254.05,304.28 1254.52,304.27 1254.52,329.27 1254.05,329.28" fill="#992f26" stroke="#992f26" stroke-width="0.6"/>
<polygon points="1254.52,304.27 1255.22,304.26 1255.92,304.25 1255.92,329.25 1255.22,329.26 1254.52,329.27" fill="#aa7d00" stroke="#aa7d00" stroke-width="0.6"/>
<polygon points="1255.92,304.25 1256.33,304.25 1256.75,304.25 1256.75,329.25 1256.33,329.25 1255.92,329.25" fill="#0a6d3d" stroke="#0a6d3d" stroke-width="0.6"/>
<polygon points="1256.75,304.25 1256.80,304.25 1256.80,329.25 1256.75,329.25" fill="#b24c00" stroke="#b24c00" stroke-width="0.6"/>
<polygon points="1256.80,246.60 1258.45,246.61 1260.10,246.62 1261.75,246.65 1263.40,246.69 1265.05,246.74 1266.70,246.81 1268.35,246.88 1270.00,246.97 1271.64,247.07 1273.29,247.17 1274.93,247.30 1276.57,247.43 1278.21,247.57 1279.84,247.73 1281.48,247.89 1283.11,248.07 1284.74,248.26 1286.37,248.46 1287.99,248.67 1289.61,248.89 1291.23,249.13 1292.84,249.37 1294.45,249.63 1296.06,249.90 1297.66,250.18 1299.26,250.47 1300.85,250.77 1302.44,251.08 1304.02,251.41 1305.60,251.74 1307.18,252.09 1308.75,252.44 1310.32,252.81 1311.88,253.19 1313.43,253.58 1314.98,253.98 1316.52,254.39 1318.06,254.81 1319.59,255.24 1321.11,255.68 1322.63,256.14 1324.14,256.60 1325.65,257.08 1327.15,257.56 1328.64,258.06 1330.12,258.56 1331.60,259.08 1333.07,259.61 1334.53,260.14 1335.98,260.69 1337.43,261.25 1338.86,261.81 1340.29,262.39 1341.71,262.98 1343.13,263.57 1344.53,264.18 1345.93,264.80 1347.31,265.42 1348.69,266.06 1350.06,266.70 1351.42,267.36 1352.77,268.02 1354.11,268.69 1355.44,269.38 1356.76,270.07 1358.07,270.77 1359.37,271.48 1360.66,272.20 1361.94,272.93 1363.21,273.66 1364.46,274.41 1365.71,275.17 1366.95,275.93 1368.17,276.70 1369.39,277.48 1370.59,278.27 1371.78,279.07 1372.97,279.87 1374.13,280.69 1375.29,281.51 1376.44,282.34 1377.57,283.17 1378.69,284.02 1379.80,284.87 1380.90,285.73 1381.98,286.60 1383.06,287.48 1384.12,288.36 1385.16,289.25 1386.20,290.15 1387.22,291.06 1388.23,291.97 1389.22,292.89 1390.20,293.81 1391.17,294.75 1392.13,295.69 1393.07,296.63 1394.00,297.59 1394.91,298.55 1395.81,299.51 1396.70,300.48 1397.57,301.46 1398.43,302.45 1399.27,303.44 1400.10,304.43 1400.92,305.43 1401.72,306.44 1402.51,307.45 1403.28,308.47 1404.04,309.49 1404.78,310.52 1405.51,311.56 1406.22,312.59 1406.92,313.64 1407.61,314.69 1408.28,315.74 1408.93,316.80 1409.57,317.86 1410.19,318.93 1410.80,320.00 1411.39,321.07 1411.97,322.15 1412.53,323.24 1413.08,324.32 1413.61,325.41 1414.12,326.51 1414.62,327.61 1415.10,328.71 1415.57,329.81 1416.02,330.92 1416.46,332.03 1416.88,333.15 1417.28,334.26 1417.67,335.38 1418.04,336.51 1418.40,337.63 1418.74,338.76 1419.06,339.89 1419.37,341.02 1419.66,342.15 1419.93,343.29 1420.19,344.43 1420.43,345.57 1420.66,346.71 1420.87,347.85 1421.06,348.99 1421.24,350.14 1421.40,351.29 1421.54,352.43 1421.67,353.58 1421.78,354.73 1421.87,355.88 1421.95,357.03 1422.01,358.18 1422.06,359.33 1422.09,360.49 1422.10,361.64 1422.10,362.79 1422.07,363.94 1422.04,365.09 1421.98,366.24 1421.91,367.39 1421.83,368.55 1421.72,369.69 1421.60,370.84 1421.47,371.99 1421.31,373.14 1421.14,374.28 1420.96,375.43 1420.76,376.57 1420.54,377.71 1420.30,378.85 1420.05,379.99 1419.78,381.13 1419.50,382.26 1419.20,383.40 1418.89,384.53 1418.55,385.66 1418.21,386.78 1417.84,387.91 1417.46,389.03 1417.06,390.14 1416.65,391.26 1416.22,392.37 1415.78,393.48 1415.32,394.59 1414.84,395.69 1414.35,396.79 1413.84,397.89 1413.32,398.98 1412.78,400.07 1412.23,401.15 1411.66,402.23 1411.07,403.31 1333.94,382.61 1334.23,382.07 1334.51,381.53 1334.79,380.98 1335.06,380.44 1335.32,379.89 1335.57,379.35 1335.82,378.80 1336.06,378.24 1336.29,377.69 1336.51,377.14 1336.73,376.58 1336.93,376.02 1337.13,375.46 1337.32,374.90 1337.50,374.34 1337.68,373.78 1337.84,373.21 1338.00,372.65 1338.15,372.08 1338.29,371.51 1338.43,370.95 1338.55,370.38 1338.67,369.81 1338.78,369.24 1338.88,368.66 1338.97,368.09 1339.06,367.52 1339.13,366.95 1339.20,366.37 1339.26,365.80 1339.31,365.22 1339.36,364.65 1339.39,364.07 1339.42,363.50 1339.44,362.92 1339.45,362.34 1339.45,361.77 1339.44,361.19 1339.43,360.62 1339.41,360.04 1339.38,359.47 1339.34,358.89 1339.29,358.32 1339.23,357.74 1339.17,357.17 1339.10,356.59 1339.02,356.02 1338.93,355.45 1338.83,354.87 1338.73,354.30 1338.62,353.73 1338.50,353.16 1338.37,352.59 1338.23,352.03 1338.08,351.46 1337.93,350.89 1337.77,350.33 1337.60,349.77 1337.42,349.20 1337.23,348.64 1337.04,348.08 1336.84,347.52 1336.63,346.97 1336.41,346.41 1336.19,345.86 1335.95,345.30 1335.71,344.75 1335.46,344.20 1335.20,343.66 1334.94,343.11 1334.66,342.57 1334.38,342.03 1334.10,341.49 1333.80,340.95 1333.50,340.41 1333.18,339.88 1332.86,339.35 1332.54,338.82 1332.20,338.29 1331.86,337.77 1331.51,337.25 1331.16,336.73 1330.79,336.21 1330.42,335.70 1330.04,335.19 1329.65,334.68 1329.26,334.17 1328.86,333.67 1328.45,333.17 1328.04,332.67 1327.61,332.17 1327.19,331.68 1326.75,331.19 1326.31,330.71 1325.86,330.22 1325.40,329.74 1324.93,329.27 1324.46,328.79 1323.99,328.32 1323.50,327.86 1323.01,327.39 1322.51,326.93 1322.01,326.48 1321.50,326.03 1320.98,325.58 1320.46,325.13 1319.93,324.69 1319.39,324.25 1318.85,323.82 1318.30,323.39 1317.75,322.96 1317.19,322.54 1316.62,322.12 1316.05,321.70 1315.47,321.29 1314.88,320.89 1314.29,320.48 1313.70,320.08 1313.09,319.69 1312.49,319.30 1311.87,318.91 1311.26,318.53 1310.63,318.16 1310.00,317.78 1309.37,317.41 1308.73,317.05 1308.08,316.69 1307.43,316.33 1306.78,315.98 1306.12,315.64 1305.45,315.30 1304.78,314.96 1304.11,314.63 1303.43,314.30 1302.74,313.98 1302.06,313.66 1301.36,313.35 1300.67,313.04 1299.96,312.74 1299.26,312.44 1298.55,312.14 1297.83,311.86 1297.11,311.57 1296.39,311.29 1295.66,311.02 1294.93,310.75 1294.20,310.49 1293.46,310.23 1292.72,309.98 1291.97,309.73 1291.22,309.49 1290.47,309.25 1289.72,309.02 1288.96,308.79 1288.19,308.57 1287.43,308.35 1286.66,308.14 1285.89,307.94 1285.11,307.74 1284.34,307.54 1283.56,307.35 1282.78,307.17 1281.99,306.99 1281.20,306.82 1280.41,306.65 1279.62,306.49 1278.83,306.33 1278.03,306.18 1277.23,306.04 1276.43,305.90 1275.62,305.77 1274.82,305.64 1274.01,305.51 1273.20,305.40 1272.39,305.29 1271.58,305.18 1270.77,305.08 1269.96,304.98 1269.14,304.90 1268.32,304.81 1267.50,304.74 1266.68,304.66 1265.86,304.60 1265.04,304.54 1264.22,304.48 1263.40,304.43 1262.58,304.39 1261.75,304.35 1260.93,304.32 1260.10,304.30 1259.28,304.28 1258.45,304.26 1257.63,304.25 1256.80,304.25" fill="#4285f4" stroke="#4285f4" stroke-width="0.5"/>
<polygon points="1411.07,403.31 1410.58,404.19 1333.69,383.04 1333.94,382.61" fill="#ea4335" stroke="#ea4335" stroke-width="0.5"/>
<polygon points="1410.58,404.19 1409.98,405.23 1409.37,406.27 1408.75,407.30 1408.11,408.33 1407.45,409.35 1406.78,410.37 1406.10,411.39 1405.40,412.40 1404.69,413.40 1403.97,414.40 1403.23,415.40 1402.47,416.39 1401.71,417.38 1400.93,418.36 1400.13,419.33 1399.33,420.30 1398.51,421.27 1397.67,422.22 1396.82,423.18 1395.96,424.12 1395.09,425.07 1394.20,426.00 1393.30,426.93 1392.39,427.85 1391.46,428.77 1324.13,395.33 1324.59,394.88 1325.05,394.41 1325.50,393.95 1325.94,393.48 1326.38,393.01 1326.81,392.54 1327.24,392.06 1327.65,391.58 1328.06,391.10 1328.47,390.62 1328.86,390.13 1329.25,389.64 1329.64,389.15 1330.01,388.65 1330.38,388.15 1330.75,387.65 1331.10,387.15 1331.45,386.64 1331.79,386.14 1332.13,385.63 1332.45,385.11 1332.77,384.60 1333.09,384.08 1333.39,383.57 1333.69,383.04" fill="#fbbc04" stroke="#fbbc04" stroke-width="0.5"/>
<polygon points="1391.46,428.77 1390.77,429.45 1390.06,430.12 1323.43,396.01 1323.78,395.67 1324.13,395.33" fill="#ff6d01" stroke="#ff6d01" stroke-width="0.5"/>
<polygon points="1390.06,430.12 1390.00,430.18 1323.40,396.04 1323.43,396.01" fill="#46bdc6" stroke="#46bdc6" stroke-width="0.5"/>
<polygon points="1390.00,430.18 1389.02,431.10 1388.02,432.02 1387.01,432.93 1385.99,433.83 1384.95,434.73 1383.90,435.62 1382.84,436.50 1381.77,437.37 1380.68,438.24 1379.59,439.09 1378.47,439.95 1377.35,440.79 1376.22,441.62 1375.07,442.45 1373.91,443.27 1372.74,444.08 1371.56,444.88 1370.37,445.68 1369.16,446.47 1367.95,447.24 1366.72,448.01 1365.48,448.77 1364.24,449.53 1362.98,450.27 1361.71,451.00 1360.43,451.73 1359.14,452.45 1357.84,453.15 1356.53,453.85 1355.21,454.54 1353.88,455.22 1352.54,455.89 1351.19,456.56 1349.83,457.21 1348.46,457.85 1347.08,458.48 1345.69,459.11 1344.30,459.72 1342.90,460.33 1341.48,460.92 1340.06,461.50 1338.63,462.08 1337.20,462.64 1335.75,463.20 1334.30,463.74 1332.84,464.28 1331.37,464.80 1329.89,465.32 1328.41,465.82 1326.92,466.31 1325.42,466.80 1323.92,467.27 1322.41,467.73 1320.89,468.18 1319.37,468.62 1317.84,469.05 1316.30,469.47 1314.76,469.88 1313.21,470.28 1311.66,470.67 1310.10,471.04 1308.53,471.41 1306.96,471.76 1305.39,472.11 1303.81,472.44 1302.23,472.76 1300.64,473.07 1299.05,473.37 1297.45,473.66 1295.85,473.94 1294.24,474.20 1292.63,474.46 1291.02,474.70 1289.41,474.93 1287.79,475.16 1286.17,475.37 1284.54,475.56 1282.91,475.75 1281.28,475.93 1279.65,476.09 1278.02,476.25 1276.38,476.39 1274.74,476.52 1273.10,476.64 1271.46,476.75 1269.81,476.84 1268.17,476.93 1266.52,477.00 1264.87,477.06 1263.23,477.11 1261.58,477.15 1259.93,477.18 1258.28,477.20 1256.63,477.20 1254.98,477.19 1253.33,477.17 1251.68,477.14 1250.03,477.10 1248.38,477.05 1246.74,476.99 1245.09,476.91 1243.45,476.82 1241.80,476.72 1240.16,476.61 1238.52,476.49 1236.88,476.36 1235.25,476.22 1233.61,476.06 1231.98,475.89 1230.35,475.71 1228.72,475.52 1227.10,475.32 1225.48,475.11 1223.86,474.89 1222.24,474.65 1220.63,474.41 1219.02,474.15 1217.42,473.88 1215.82,473.60 1214.22,473.31 1212.63,473.01 1211.05,472.70 1209.46,472.37 1207.88,472.04 1206.31,471.69 1204.74,471.33 1203.18,470.97 1201.62,470.59 1200.07,470.20 1198.52,469.80 1196.98,469.39 1195.45,468.96 1193.92,468.53 1192.40,468.09 1190.88,467.64 1189.37,467.17 1187.87,466.70 1186.37,466.21 1184.88,465.72 1183.40,465.21 1181.93,464.69 1180.46,464.17 1179.00,463.63 1177.55,463.08 1176.11,462.53 1174.67,461.96 1173.24,461.38 1171.82,460.80 1170.41,460.20 1169.01,459.60 1167.62,458.98 1166.23,458.35 1164.86,457.72 1163.49,457.07 1162.13,456.42 1160.79,455.76 1159.45,455.08 1158.12,454.40 1156.80,453.71 1155.49,453.01 1154.19,452.30 1152.91,451.58 1151.63,450.85 1150.36,450.12 1149.10,449.37 1147.86,448.62 1146.62,447.85 1145.40,447.08 1144.19,446.30 1142.98,445.52 1141.79,444.72 1140.61,443.91 1139.45,443.10 1138.29,442.28 1137.15,441.45 1136.01,440.61 1134.89,439.77 1133.79,438.92 1132.69,438.06 1131.61,437.19 1130.54,436.31 1129.48,435.43 1128.43,434.54 1127.40,433.64 1126.38,432.74 1125.37,431.83 1124.38,430.91 1123.40,429.99 1122.43,429.05 1121.48,428.11 1120.54,427.17 1119.61,426.22 1118.70,425.26 1117.80,424.30 1116.91,423.32 1116.04,422.35 1115.18,421.36 1114.34,420.38 1113.51,419.38 1112.69,418.38 1111.89,417.38 1111.10,416.36 1110.33,415.35 1109.57,414.32 1108.83,413.30 1108.10,412.26 1107.39,411.23 1106.69,410.18 1106.01,409.14 1105.34,408.09 1104.69,407.03 1104.05,405.97 1103.43,404.90 1102.82,403.83 1102.23,402.76 1101.65,401.68 1101.09,400.60 1100.54,399.51 1100.01,398.42 1099.50,397.33 1099.00,396.23 1098.52,395.13 1098.05,394.03 1097.60,392.92 1097.16,391.81 1096.74,390.70 1096.34,389.59 1095.95,388.47 1095.58,387.35 1095.22,386.22 1094.88,385.10 1094.56,383.97 1094.25,382.84 1093.96,381.71 1093.68,380.57 1093.42,379.43 1093.18,378.30 1092.95,377.16 1092.74,376.02 1092.55,374.87 1092.37,373.73 1092.21,372.58 1092.07,371.44 1091.94,370.29 1091.83,369.14 1091.73,367.99 1091.65,366.84 1091.59,365.69 1091.54,364.54 1091.51,363.39 1091.50,362.24 1091.50,361.09 1091.52,359.94 1091.56,358.79 1091.61,357.64 1091.68,356.49 1091.77,355.34 1091.87,354.19 1091.99,353.05 1092.12,351.90 1092.27,350.75 1092.44,349.61 1092.63,348.47 1092.83,347.32 1093.04,346.18 1093.28,345.04 1093.53,343.91 1093.79,342.77 1094.07,341.64 1094.37,340.51 1094.68,339.38 1095.02,338.25 1095.36,337.12 1095.72,336.00 1096.10,334.88 1096.50,333.76 1096.91,332.65 1097.33,331.54 1097.78,330.43 1098.23,329.32 1098.71,328.22 1099.20,327.12 1099.70,326.03 1100.22,324.94 1100.76,323.85 1101.31,322.76 1101.88,321.68 1102.46,320.61 1103.06,319.54 1103.68,318.47 1104.31,317.40 1104.95,316.34 1105.61,315.29 1106.28,314.24 1106.97,313.19 1107.68,312.15 1108.40,311.12 1109.13,310.09 1109.88,309.06 1110.64,308.04 1111.42,307.03 1112.21,306.02 1113.02,305.01 1113.84,304.02 1114.68,303.02 1115.52,302.04 1116.39,301.06 1117.27,300.08 1118.16,299.11 1119.06,298.15 1119.98,297.20 1120.91,296.25 1121.86,295.31 1122.82,294.37 1123.79,293.44 1124.78,292.52 1125.78,291.60 1126.79,290.69 1127.81,289.79 1128.85,288.90 1129.90,288.01 1130.97,287.13 1132.04,286.26 1133.13,285.39 1134.23,284.54 1135.34,283.69 1136.47,282.85 1137.61,282.01 1138.76,281.19 1139.92,280.37 1141.09,279.56 1142.27,278.76 1143.47,277.97 1144.67,277.18 1145.89,276.40 1147.12,275.64 1148.36,274.88 1149.61,274.13 1150.87,273.39 1152.14,272.65 1153.43,271.93 1154.72,271.21 1156.02,270.51 1157.33,269.81 1158.66,269.12 1159.99,268.44 1161.33,267.78 1162.68,267.12 1164.04,266.46 1165.41,265.82 1166.79,265.19 1168.18,264.57 1169.58,263.96 1170.98,263.36 1172.40,262.76 1173.82,262.18 1175.25,261.61 1176.69,261.05 1178.13,260.49 1179.59,259.95 1181.05,259.42 1182.52,258.90 1184.00,258.38 1185.48,257.88 1186.98,257.39 1188.47,256.91 1189.98,256.44 1191.49,255.98 1193.01,255.53 1194.54,255.09 1196.07,254.66 1197.60,254.25 1199.15,253.84 1200.70,253.44 1202.25,253.06 1203.81,252.68 1205.38,252.32 1206.95,251.97 1208.52,251.63 1210.10,251.30 1211.69,250.98 1234.24,306.44 1233.45,306.60 1232.66,306.76 1231.87,306.93 1231.09,307.11 1230.30,307.29 1229.53,307.48 1228.75,307.67 1227.97,307.87 1227.20,308.07 1226.43,308.28 1225.67,308.50 1224.91,308.72 1224.15,308.94 1223.39,309.17 1222.64,309.41 1221.89,309.65 1221.14,309.89 1220.40,310.14 1219.66,310.40 1218.93,310.66 1218.19,310.93 1217.47,311.20 1216.74,311.47 1216.02,311.75 1215.31,312.04 1214.60,312.33 1213.89,312.63 1213.19,312.93 1212.49,313.24 1211.80,313.55 1211.11,313.86 1210.42,314.18 1209.74,314.51 1209.06,314.84 1208.39,315.17 1207.73,315.51 1207.07,315.86 1206.41,316.20 1205.76,316.56 1205.11,316.91 1204.47,317.28 1203.84,317.64 1203.21,318.01 1202.58,318.39 1201.96,318.77 1201.35,319.15 1200.74,319.54 1200.13,319.93 1199.54,320.33 1198.94,320.73 1198.36,321.13 1197.78,321.54 1197.20,321.96 1196.63,322.37 1196.07,322.79 1195.52,323.22 1194.97,323.65 1194.42,324.08 1193.88,324.52 1193.35,324.96 1192.83,325.40 1192.31,325.85 1191.79,326.30 1191.29,326.75 1190.79,327.21 1190.30,327.67 1189.81,328.13 1189.33,328.60 1188.86,329.07 1188.39,329.55 1187.93,330.03 1187.48,330.51 1187.03,330.99 1186.59,331.48 1186.16,331.97 1185.74,332.46 1185.32,332.96 1184.91,333.46 1184.51,333.96 1184.11,334.46 1183.72,334.97 1183.34,335.48 1182.97,335.99 1182.60,336.51 1182.24,337.03 1181.89,337.55 1181.54,338.07 1181.20,338.59 1180.87,339.12 1180.55,339.65 1180.24,340.18 1179.93,340.72 1179.63,341.25 1179.34,341.79 1179.06,342.33 1178.78,342.87 1178.51,343.42 1178.25,343.96 1178.00,344.51 1177.75,345.06 1177.52,345.61 1177.29,346.16 1177.07,346.72 1176.85,347.27 1176.65,347.83 1176.45,348.39 1176.26,348.95 1176.08,349.51 1175.91,350.07 1175.74,350.64 1175.59,351.20 1175.44,351.77 1175.30,352.34 1175.16,352.90 1175.04,353.47 1174.92,354.04 1174.81,354.61 1174.71,355.18 1174.62,355.75 1174.54,356.33 1174.46,356.90 1174.39,357.47 1174.33,358.05 1174.28,358.62 1174.24,359.20 1174.21,359.77 1174.18,360.35 1174.16,360.92 1174.15,361.50 1174.15,362.07 1174.16,362.65 1174.17,363.22 1174.19,363.80 1174.23,364.37 1174.27,364.95 1174.31,365.52 1174.37,366.10 1174.43,366.67 1174.51,367.24 1174.59,367.81 1174.67,368.39 1174.77,368.96 1174.88,369.53 1174.99,370.10 1175.11,370.67 1175.24,371.24 1175.38,371.80 1175.52,372.37 1175.68,372.93 1175.84,373.50 1176.01,374.06 1176.19,374.62 1176.37,375.18 1176.57,375.74 1176.77,376.30 1176.98,376.86 1177.20,377.41 1177.42,377.96 1177.66,378.52 1177.90,379.07 1178.15,379.62 1178.41,380.16 1178.67,380.71 1178.94,381.25 1179.23,381.79 1179.51,382.33 1179.81,382.87 1180.11,383.40 1180.42,383.93 1180.74,384.46 1181.07,384.99 1181.40,385.52 1181.75,386.04 1182.10,386.56 1182.45,387.08 1182.82,387.60 1183.19,388.11 1183.57,388.62 1183.95,389.13 1184.35,389.64 1184.75,390.14 1185.15,390.64 1185.57,391.14 1185.99,391.63 1186.42,392.12 1186.85,392.61 1187.30,393.10 1187.75,393.58 1188.20,394.06 1188.67,394.53 1189.14,395.01 1189.62,395.48 1190.10,395.94 1190.59,396.41 1191.09,396.86 1191.59,397.32 1192.10,397.77 1192.62,398.22 1193.14,398.67 1193.67,399.11 1194.20,399.54 1194.75,399.98 1195.29,400.41 1195.85,400.83 1196.41,401.26 1196.97,401.68 1197.55,402.09 1198.12,402.50 1198.71,402.91 1199.30,403.31 1199.89,403.71 1200.49,404.10 1201.10,404.49 1201.71,404.88 1202.33,405.26 1202.95,405.64 1203.58,406.01 1204.21,406.38 1204.85,406.74 1205.50,407.10 1206.15,407.45 1206.80,407.80 1207.46,408.15 1208.12,408.49 1208.79,408.83 1209.47,409.16 1210.15,409.49 1210.83,409.81 1211.52,410.13 1212.21,410.44 1212.91,410.75 1213.61,411.05 1214.31,411.35 1215.02,411.64 1215.74,411.93 1216.45,412.21 1217.17,412.49 1217.90,412.77 1218.63,413.03 1219.36,413.30 1220.10,413.56 1220.84,413.81 1221.59,414.06 1222.33,414.30 1223.09,414.54 1223.84,414.77 1224.60,414.99 1225.36,415.22 1226.12,415.43 1226.89,415.64 1227.66,415.85 1228.43,416.05 1229.21,416.24 1229.99,416.43 1230.77,416.62 1231.56,416.80 1232.34,416.97 1233.13,417.14 1233.92,417.30 1234.72,417.45 1235.51,417.60 1236.31,417.75 1237.11,417.89 1237.91,418.02 1238.72,418.15 1239.52,418.28 1240.33,418.39 1241.14,418.51 1241.95,418.61 1242.76,418.71 1243.57,418.81 1244.39,418.90 1245.21,418.98 1246.02,419.06 1246.84,419.13 1247.66,419.20 1248.48,419.26 1249.30,419.31 1250.12,419.36 1250.95,419.41 1251.77,419.44 1252.59,419.48 1253.42,419.50 1254.24,419.52 1255.07,419.54 1255.89,419.55 1256.71,419.55 1257.54,419.55 1258.36,419.54 1259.19,419.53 1260.01,419.51 1260.84,419.48 1261.66,419.45 1262.48,419.41 1263.31,419.37 1264.13,419.32 1264.95,419.27 1265.77,419.21 1266.59,419.14 1267.41,419.07 1268.23,419.00 1269.04,418.91 1269.86,418.83 1270.67,418.73 1271.48,418.63 1272.29,418.53 1273.10,418.42 1273.91,418.30 1274.72,418.18 1275.52,418.05 1276.32,417.92 1277.12,417.78 1277.92,417.64 1278.72,417.49 1279.51,417.33 1280.31,417.17 1281.09,417.00 1281.88,416.83 1282.67,416.65 1283.45,416.47 1284.23,416.28 1285.00,416.09 1285.78,415.89 1286.55,415.69 1287.32,415.48 1288.08,415.26 1288.84,415.04 1289.60,414.81 1290.36,414.58 1291.11,414.35 1291.86,414.11 1292.60,413.86 1293.35,413.61 1294.08,413.35 1294.82,413.09 1295.55,412.82 1296.28,412.55 1297.00,412.27 1297.72,411.99 1298.43,411.70 1299.14,411.41 1299.85,411.11 1300.55,410.81 1301.25,410.50 1301.94,410.19 1302.63,409.88 1303.31,409.55 1303.99,409.23 1304.67,408.90 1305.34,408.56 1306.00,408.22 1306.66,407.88 1307.32,407.53 1307.97,407.17 1308.61,406.81 1309.25,406.45 1309.89,406.08 1310.52,405.71 1311.14,405.34 1311.76,404.96 1312.37,404.57 1312.98,404.18 1313.58,403.79 1314.18,403.39 1314.77,402.99 1315.36,402.59 1315.94,402.18 1316.51,401.76 1317.08,401.34 1317.64,400.92 1318.19,400.50 1318.74,400.07 1319.28,399.63 1319.82,399.20 1320.35,398.76 1320.88,398.31 1321.39,397.87 1321.91,397.41 1322.41,396.96 1322.91,396.50 1323.40,396.04" fill="#ab30c4" stroke="#ab30c4" stroke-width="0.5"/>
<polygon points="1211.69,250.98 1213.19,250.69 1214.69,250.40 1235.75,306.15 1234.99,306.29 1234.24,306.44" fill="#c0b82a" stroke="#c0b82a" stroke-width="0.5"/>
<polygon points="1214.69,250.40 1216.29,250.12 1217.89,249.84 1219.50,249.57 1221.11,249.32 1222.72,249.08 1224.34,248.84 1225.96,248.62 1227.59,248.42 1229.21,248.22 1230.84,248.03 1243.82,304.97 1243.01,305.06 1242.19,305.16 1241.38,305.26 1240.57,305.37 1239.76,305.49 1238.95,305.61 1238.15,305.74 1237.35,305.87 1236.54,306.01 1235.75,306.15" fill="#3b4aab" stroke="#3b4aab" stroke-width="0.5"/>
<polygon points="1230.84,248.03 1232.18,247.89 1233.51,247.75 1245.16,304.83 1244.49,304.89 1243.82,304.97" fill="#f272a8" stroke="#f272a8" stroke-width="0.5"/>
<polygon points="1233.51,247.75 1234.68,247.64 1235.84,247.53 1237.01,247.43 1246.91,304.66 1246.32,304.72 1245.74,304.77 1245.16,304.83" fill="#00695a" stroke="#00695a" stroke-width="0.5"/>
<polygon points="1237.01,247.43 1238.53,247.31 1240.06,247.19 1241.58,247.09 1243.11,247.00 1249.95,304.45 1249.19,304.49 1248.43,304.55 1247.67,304.60 1246.91,304.66" fill="#c2185b" stroke="#c2185b" stroke-width="0.5"/>
<polygon points="1243.11,247.00 1244.74,246.91 1246.38,246.83 1248.02,246.76 1249.66,246.71 1251.30,246.66 1254.05,304.28 1253.23,304.30 1252.41,304.33 1251.59,304.36 1250.77,304.40 1249.95,304.45" fill="#4a86f2" stroke="#4a86f2" stroke-width="0.5"/>
<polygon points="1251.30,246.66 1252.23,246.64 1254.52,304.27 1254.05,304.28" fill="#db4437" stroke="#db4437" stroke-width="0.5"/>
<polygon points="1252.23,246.64 1253.63,246.62 1255.03,246.61 1255.92,304.25 1255.22,304.26 1254.52,304.27" fill="#f4b400" stroke="#f4b400" stroke-width="0.5"/>
<polygon points="1255.03,246.61 1255.87,246.60 1256.70,246.60 1256.75,304.25 1256.33,304.25 1255.92,304.25" fill="#0f9d58" stroke="#0f9d58" stroke-width="0.5"/>
<polygon points="1256.70,246.60 1256.80,246.60 1256.80,304.25 1256.75,304.25" fill="#ff6d00" stroke="#ff6d00" stroke-width="0.5"/>
<line x1="1256.80" y1="304.25" x2="1256.80" y2="246.60" stroke="rgba(255,255,255,0.35)" stroke-width="0.7"/>
<line x1="1333.94" y1="382.61" x2="1411.07" y2="403.31" stroke="rgba(255,255,255,0.35)" stroke-width="0.7"/>
<line x1="1333.69" y1="383.04" x2="1410.58" y2="404.19" stroke="rgba(255,255,255,0.35)" stroke-width="0.7"/>
<line x1="1324.13" y1="395.33" x2="1391.46" y2="428.77" stroke="rgba(255,255,255,0.35)" stroke-width="0.7"/>
<line x1="1323.43" y1="396.01" x2="1390.06" y2="430.12" stroke="rgba(255,255,255,0.35)" stroke-width="0.7"/>
<line x1="1323.40" y1="396.04" x2="1390.00" y2="430.18" stroke="rgba(255,255,255,0.35)" stroke-width="0.7"/>
<line x1="1234.24" y1="306.44" x2="1211.69" y2="250.98" stroke="rgba(255,255,255,0.35)" stroke-width="0.7"/>
<line x1="1235.75" y1="306.15" x2="1214.69" y2="250.40" stroke="rgba(255,255,255,0.35)" stroke-width="0.7"/>
<line x1="1243.82" y1="304.97" x2="1230.84" y2="248.03" stroke="rgba(255,255,255,0.35)" stroke-width="0.7"/>
<line x1="1245.16" y1="304.83" x2="1233.51" y2="247.75" stroke="rgba(255,255,255,0.35)" stroke-width="0.7"/>
<line x1="1246.91" y1="304.66" x2="1237.01" y2="247.43" stroke="rgba(255,255,255,0.35)" stroke-width="0.7"/>
<line x1="1249.95" y1="304.45" x2="1243.11" y2="247.00" stroke="rgba(255,255,255,0.35)" stroke-width="0.7"/>
<line x1="1254.05" y1="304.28" x2="1251.30" y2="246.66" stroke="rgba(255,255,255,0.35)" stroke-width="0.7"/>
<line x1="1254.52" y1="304.27" x2="1252.23" y2="246.64" stroke="rgba(255,255,255,0.35)" stroke-width="0.7"/>
<line x1="1255.92" y1="304.25" x2="1255.03" y2="246.61" stroke="rgba(255,255,255,0.35)" stroke-width="0.7"/>
<line x1="1256.75" y1="304.25" x2="1256.70" y2="246.60" stroke="rgba(255,255,255,0.35)" stroke-width="0.7"/>
<polyline points="1422.10,361.90 1422.09,363.05 1422.07,364.20 1422.03,365.35 1421.97,366.50 1421.89,367.65 1421.80,368.80 1421.70,369.94 1421.57,371.09 1421.43,372.24 1421.28,373.38 1421.11,374.52 1420.92,375.67 1420.71,376.81 1420.49,377.95 1420.25,379.08 1420.00,380.22 1419.73,381.36 1419.44,382.49 1419.14,383.62 1418.82,384.75 1418.49,385.87 1418.14,387.00 1417.77,388.12 1417.39,389.24 1416.99,390.35 1416.57,391.46 1416.14,392.57 1415.70,393.68 1415.23,394.78 1414.76,395.89 1414.26,396.98 1413.75,398.08 1413.23,399.17 1412.69,400.25 1412.13,401.33 1411.56,402.41 1410.97,403.49 1410.37,404.56 1409.75,405.62 1409.12,406.69 1408.47,407.74 1407.81,408.80 1407.13,409.84 1406.44,410.89 1405.73,411.93 1405.01,412.96 1404.27,413.99 1403.52,415.01 1402.75,416.03 1401.97,417.04 1401.17,418.05 1400.36,419.05 1399.54,420.05 1398.70,421.04 1397.85,422.02 1396.98,423.00 1396.10,423.97 1395.21,424.94 1394.30,425.90 1393.38,426.85 1392.44,427.80 1391.49,428.74 1390.53,429.67 1389.55,430.60 1388.57,431.52 1387.56,432.43 1386.55,433.34 1385.52,434.24 1384.48,435.13 1383.43,436.01 1382.36,436.89 1381.28,437.76 1380.19,438.62 1379.09,439.48 1377.97,440.32 1376.85,441.16 1375.71,441.99 1374.56,442.82 1373.39,443.63 1372.22,444.44 1371.03,445.24 1369.84,446.03 1368.63,446.81 1367.41,447.58 1366.18,448.35 1364.94,449.11 1363.68,449.85 1362.42,450.59 1361.15,451.32 1359.86,452.05 1358.57,452.76 1357.26,453.46 1355.95,454.16 1354.63,454.84 1353.29,455.52 1351.95,456.18 1350.60,456.84 1349.23,457.49 1347.86,458.13 1346.48,458.75 1345.09,459.37 1343.70,459.98 1342.29,460.58 1340.87,461.17 1339.45,461.75 1338.02,462.32 1336.58,462.88 1335.13,463.43 1333.67,463.97 1332.21,464.50 1330.74,465.02 1329.26,465.53 1327.78,466.03 1326.29,466.52 1324.79,467.00 1323.28,467.46 1321.77,467.92 1320.25,468.37 1318.72,468.80 1317.19,469.23 1315.65,469.64 1314.11,470.05 1312.56,470.44 1311.01,470.82 1309.45,471.20 1307.88,471.56 1306.31,471.91 1304.73,472.25 1303.15,472.57 1301.57,472.89 1299.98,473.20 1298.39,473.49 1296.79,473.78 1295.19,474.05 1293.58,474.31 1291.97,474.56 1290.36,474.80 1288.75,475.03 1287.13,475.24 1285.50,475.45 1283.88,475.64 1282.25,475.83 1280.62,476.00 1278.99,476.16 1277.35,476.31 1275.72,476.44 1274.08,476.57 1272.44,476.68 1270.80,476.79 1269.15,476.88 1267.51,476.96 1265.86,477.03 1264.22,477.08 1262.57,477.13 1260.92,477.16 1259.27,477.19 1257.62,477.20 1255.98,477.20 1254.33,477.19 1252.68,477.16 1251.03,477.13 1249.38,477.08 1247.74,477.03 1246.09,476.96 1244.45,476.88 1242.80,476.79 1241.16,476.68 1239.52,476.57 1237.88,476.44 1236.25,476.31 1234.61,476.16 1232.98,476.00 1231.35,475.83 1229.72,475.64 1228.10,475.45 1226.47,475.24 1224.85,475.03 1223.24,474.80 1221.63,474.56 1220.02,474.31 1218.41,474.05 1216.81,473.78 1215.21,473.49 1213.62,473.20 1212.03,472.89 1210.45,472.57 1208.87,472.25 1207.29,471.91 1205.72,471.56 1204.15,471.20 1202.59,470.82 1201.04,470.44 1199.49,470.05 1197.95,469.64 1196.41,469.23 1194.88,468.80 1193.35,468.37 1191.83,467.92 1190.32,467.46 1188.81,467.00 1187.31,466.52 1185.82,466.03 1184.34,465.53 1182.86,465.02 1181.39,464.50 1179.93,463.97 1178.47,463.43 1177.02,462.88 1175.58,462.32 1174.15,461.75 1172.73,461.17 1171.31,460.58 1169.90,459.98 1168.51,459.37 1167.12,458.75 1165.74,458.13 1164.37,457.49 1163.00,456.84 1161.65,456.18 1160.31,455.52 1158.97,454.84 1157.65,454.16 1156.34,453.46 1155.03,452.76 1153.74,452.05 1152.45,451.32 1151.18,450.59 1149.92,449.85 1148.66,449.11 1147.42,448.35 1146.19,447.58 1144.97,446.81 1143.76,446.03 1142.57,445.24 1141.38,444.44 1140.21,443.63 1139.04,442.82 1137.89,441.99 1136.75,441.16 1135.63,440.32 1134.51,439.48 1133.41,438.62 1132.32,437.76 1131.24,436.89 1130.17,436.01 1129.12,435.13 1128.08,434.24 1127.05,433.34 1126.04,432.43 1125.03,431.52 1124.05,430.60 1123.07,429.67 1122.11,428.74 1121.16,427.80 1120.22,426.85 1119.30,425.90 1118.39,424.94 1117.50,423.97 1116.62,423.00 1115.75,422.02 1114.90,421.04 1114.06,420.05 1113.24,419.05 1112.43,418.05 1111.63,417.04 1110.85,416.03 1110.08,415.01 1109.33,413.99 1108.59,412.96 1107.87,411.93 1107.16,410.89 1106.47,409.84 1105.79,408.80 1105.13,407.74 1104.48,406.69 1103.85,405.62 1103.23,404.56 1102.63,403.49 1102.04,402.41 1101.47,401.33 1100.91,400.25 1100.37,399.17 1099.85,398.08 1099.34,396.98 1098.84,395.89 1098.37,394.78 1097.90,393.68 1097.46,392.57 1097.03,391.46 1096.61,390.35 1096.21,389.24 1095.83,388.12 1095.46,387.00 1095.11,385.87 1094.78,384.75 1094.46,383.62 1094.16,382.49 1093.87,381.36 1093.60,380.22 1093.35,379.08 1093.11,377.95 1092.89,376.81 1092.68,375.67 1092.49,374.52 1092.32,373.38 1092.17,372.24 1092.03,371.09 1091.90,369.94 1091.80,368.80 1091.71,367.65 1091.63,366.50 1091.57,365.35 1091.53,364.20 1091.51,363.05 1091.50,361.90" fill="none" stroke="rgba(255,255,255,0.3)" stroke-width="0.8"/>
<polyline points="1174.15,361.90 1174.15,361.33 1174.17,360.75 1174.19,360.18 1174.22,359.60 1174.25,359.03 1174.30,358.45 1174.35,357.88 1174.41,357.31 1174.48,356.73 1174.56,356.16 1174.65,355.59 1174.74,355.02 1174.84,354.45 1174.95,353.88 1175.07,353.31 1175.20,352.74 1175.34,352.17 1175.48,351.61 1175.63,351.04 1175.79,350.48 1175.96,349.91 1176.13,349.35 1176.31,348.79 1176.51,348.23 1176.71,347.67 1176.91,347.12 1177.13,346.56 1177.35,346.01 1177.58,345.46 1177.82,344.91 1178.07,344.36 1178.32,343.81 1178.59,343.27 1178.86,342.72 1179.13,342.18 1179.42,341.64 1179.71,341.11 1180.01,340.57 1180.32,340.04 1180.64,339.51 1180.96,338.98 1181.30,338.45 1181.63,337.93 1181.98,337.41 1182.33,336.89 1182.70,336.37 1183.06,335.86 1183.44,335.34 1183.82,334.83 1184.21,334.33 1184.61,333.83 1185.02,333.32 1185.43,332.83 1185.85,332.33 1186.28,331.84 1186.71,331.35 1187.15,330.86 1187.60,330.38 1188.05,329.90 1188.51,329.42 1188.98,328.95 1189.45,328.48 1189.93,328.01 1190.42,327.55 1190.92,327.09 1191.42,326.63 1191.93,326.18 1192.44,325.73 1192.96,325.29 1193.49,324.84 1194.02,324.40 1194.56,323.97 1195.10,323.54 1195.66,323.11 1196.21,322.69 1196.78,322.27 1197.35,321.85 1197.92,321.44 1198.50,321.03 1199.09,320.63 1199.68,320.23 1200.28,319.84 1200.89,319.44 1201.50,319.06 1202.11,318.68 1202.73,318.30 1203.36,317.92 1203.99,317.55 1204.63,317.19 1205.27,316.83 1205.92,316.47 1206.57,316.12 1207.22,315.77 1207.89,315.43 1208.55,315.09 1209.23,314.76 1209.90,314.43 1210.58,314.11 1211.27,313.79 1211.96,313.47 1212.65,313.16 1213.35,312.86 1214.06,312.56 1214.76,312.26 1215.47,311.97 1216.19,311.69 1216.91,311.41 1217.63,311.13 1218.36,310.86 1219.09,310.60 1219.83,310.34 1220.57,310.08 1221.31,309.84 1222.06,309.59 1222.81,309.35 1223.56,309.12 1224.32,308.89 1225.08,308.67 1225.84,308.45 1226.60,308.24 1227.37,308.03 1228.15,307.83 1228.92,307.63 1229.70,307.44 1230.48,307.25 1231.26,307.07 1232.04,306.90 1232.83,306.73 1233.62,306.56 1234.42,306.40 1235.21,306.25 1236.01,306.10 1236.81,305.96 1237.61,305.83 1238.41,305.70 1239.21,305.57 1240.02,305.45 1240.83,305.34 1241.64,305.23 1242.45,305.13 1243.26,305.03 1244.07,304.94 1244.89,304.85 1245.71,304.77 1246.52,304.70 1247.34,304.63 1248.16,304.57 1248.98,304.51 1249.80,304.46 1250.62,304.41 1251.45,304.37 1252.27,304.34 1253.09,304.31 1253.92,304.29 1254.74,304.27 1255.56,304.26 1256.39,304.25 1257.21,304.25 1258.04,304.26 1258.86,304.27 1259.68,304.29 1260.51,304.31 1261.33,304.34 1262.15,304.37 1262.98,304.41 1263.80,304.46 1264.62,304.51 1265.44,304.57 1266.26,304.63 1267.08,304.70 1267.89,304.77 1268.71,304.85 1269.53,304.94 1270.34,305.03 1271.15,305.13 1271.96,305.23 1272.77,305.34 1273.58,305.45 1274.39,305.57 1275.19,305.70 1275.99,305.83 1276.79,305.96 1277.59,306.10 1278.39,306.25 1279.18,306.40 1279.98,306.56 1280.77,306.73 1281.56,306.90 1282.34,307.07 1283.12,307.25 1283.90,307.44 1284.68,307.63 1285.45,307.83 1286.23,308.03 1287.00,308.24 1287.76,308.45 1288.52,308.67 1289.28,308.89 1290.04,309.12 1290.79,309.35 1291.54,309.59 1292.29,309.84 1293.03,310.08 1293.77,310.34 1294.51,310.60 1295.24,310.86 1295.97,311.13 1296.69,311.41 1297.41,311.69 1298.12,311.97 1298.84,312.26 1299.54,312.56 1300.25,312.86 1300.95,313.16 1301.64,313.47 1302.33,313.79 1303.02,314.11 1303.70,314.43 1304.37,314.76 1305.05,315.09 1305.71,315.43 1306.38,315.77 1307.03,316.12 1307.68,316.47 1308.33,316.83 1308.97,317.19 1309.61,317.55 1310.24,317.92 1310.87,318.30 1311.49,318.68 1312.10,319.06 1312.71,319.44 1313.32,319.84 1313.92,320.23 1314.51,320.63 1315.10,321.03 1315.68,321.44 1316.25,321.85 1316.82,322.27 1317.39,322.69 1317.94,323.11 1318.50,323.54 1319.04,323.97 1319.58,324.40 1320.11,324.84 1320.64,325.29 1321.16,325.73 1321.67,326.18 1322.18,326.63 1322.68,327.09 1323.18,327.55 1323.67,328.01 1324.15,328.48 1324.62,328.95 1325.09,329.42 1325.55,329.90 1326.00,330.38 1326.45,330.86 1326.89,331.35 1327.32,331.84 1327.75,332.33 1328.17,332.83 1328.58,333.32 1328.99,333.83 1329.39,334.33 1329.78,334.83 1330.16,335.34 1330.54,335.86 1330.90,336.37 1331.27,336.89 1331.62,337.41 1331.97,337.93 1332.30,338.45 1332.64,338.98 1332.96,339.51 1333.28,340.04 1333.59,340.57 1333.89,341.11 1334.18,341.64 1334.47,342.18 1334.74,342.72 1335.01,343.27 1335.28,343.81 1335.53,344.36 1335.78,344.91 1336.02,345.46 1336.25,346.01 1336.47,346.56 1336.69,347.12 1336.89,347.67 1337.09,348.23 1337.29,348.79 1337.47,349.35 1337.64,349.91 1337.81,350.48 1337.97,351.04 1338.12,351.61 1338.26,352.17 1338.40,352.74 1338.53,353.31 1338.65,353.88 1338.76,354.45 1338.86,355.02 1338.95,355.59 1339.04,356.16 1339.12,356.73 1339.19,357.31 1339.25,357.88 1339.30,358.45 1339.35,359.03 1339.38,359.60 1339.41,360.18 1339.43,360.75 1339.45,361.33 1339.45,361.90" fill="none" stroke="rgba(255,255,255,0.3)" stroke-width="0.8"/>
<text x="1358" y="317" fill="#fff" font-weight="bold" font-size="13.8" text-anchor="middle">html</text>
<text x="1366" y="408" fill="#fff" font-weight="bold" font-size="13.8" text-anchor="middle">pdf</text>
<text x="1155" y="416" fill="#fff" font-weight="bold" font-size="13.8" text-anchor="middle">kép</text>
</svg>
</body></html>
